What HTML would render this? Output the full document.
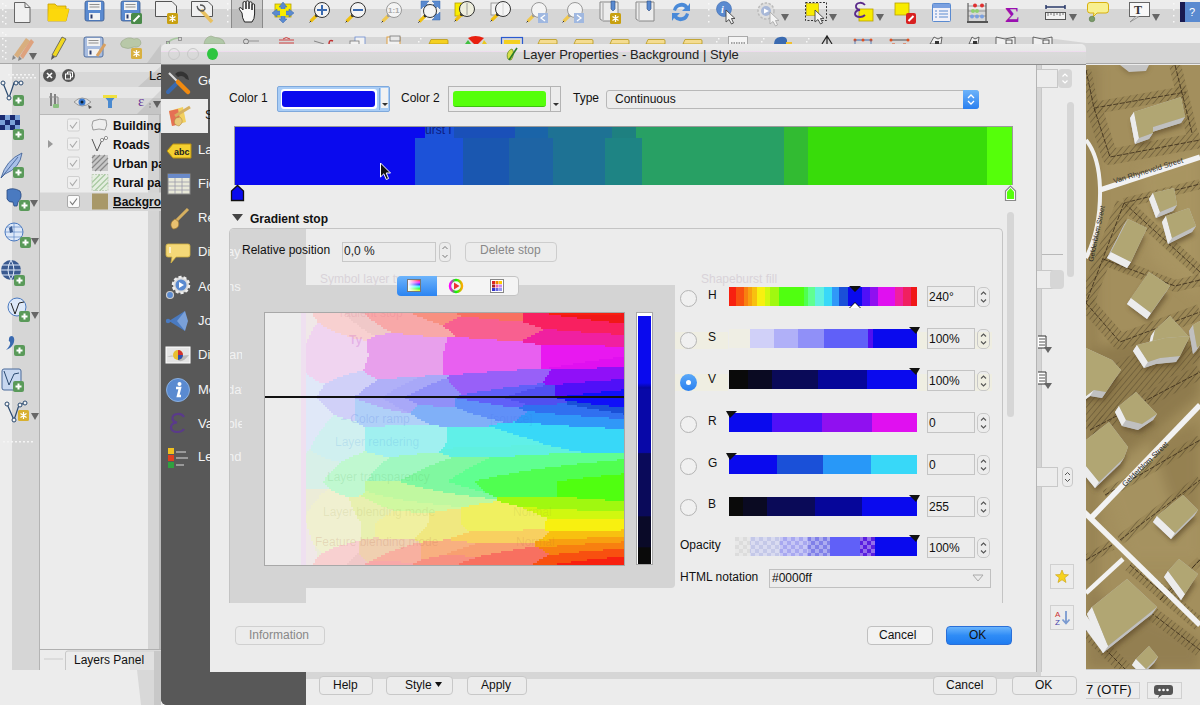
<!DOCTYPE html>
<html><head><meta charset="utf-8">
<style>
*{box-sizing:border-box;margin:0;padding:0}
html,body{width:1200px;height:705px;overflow:hidden;background:#ececec;font-family:"Liberation Sans",sans-serif;font-size:13px;color:#111;position:relative}
.a{position:absolute}
.t{position:absolute;white-space:nowrap;line-height:1}
</style></head><body>
<!-- top toolbars -->
<svg class="a" style="left:0;top:0" width="1200" height="65"><rect x="0" y="0" width="1200" height="9" fill="#ececec"/><rect x="0" y="9" width="1200" height="19" fill="#d6d6d6"/><rect x="0" y="28" width="1200" height="9" fill="#ececec"/><rect x="0" y="37" width="1200" height="26" fill="#d6d6d6"/><rect x="1086" y="28" width="114" height="15" fill="#ececec"/><path d="M1040 37 L1086 43 V37 Z" fill="#ececec"/><rect x="0" y="63" width="1200" height="1" fill="#a8a8a8"/><rect x="231" y="0" width="32" height="28" fill="#bdbdbd"/><rect x="231" y="0" width="32" height="9" fill="#cfcfcf"/><rect x="231" y="0" width="1" height="28" fill="#8a8a8a"/><rect x="262" y="0" width="1" height="28" fill="#8a8a8a"/><rect x="2" y="3" width="1.5" height="1.5" fill="#f8f8f8"/><rect x="2" y="9" width="1.5" height="1.5" fill="#f8f8f8"/><rect x="2" y="15" width="1.5" height="1.5" fill="#f8f8f8"/><rect x="2" y="21" width="1.5" height="1.5" fill="#f8f8f8"/><rect x="5" y="5" width="1.5" height="1.5" fill="#f8f8f8"/><rect x="5" y="11" width="1.5" height="1.5" fill="#f8f8f8"/><rect x="5" y="17" width="1.5" height="1.5" fill="#f8f8f8"/><rect x="5" y="23" width="1.5" height="1.5" fill="#f8f8f8"/><rect x="227" y="3" width="1.5" height="1.5" fill="#f8f8f8"/><rect x="227" y="9" width="1.5" height="1.5" fill="#f8f8f8"/><rect x="227" y="15" width="1.5" height="1.5" fill="#f8f8f8"/><rect x="227" y="21" width="1.5" height="1.5" fill="#f8f8f8"/><rect x="708" y="3" width="1.5" height="1.5" fill="#f8f8f8"/><rect x="708" y="9" width="1.5" height="1.5" fill="#f8f8f8"/><rect x="708" y="15" width="1.5" height="1.5" fill="#f8f8f8"/><rect x="708" y="21" width="1.5" height="1.5" fill="#f8f8f8"/><rect x="1173" y="3" width="1.5" height="1.5" fill="#f8f8f8"/><rect x="1173" y="9" width="1.5" height="1.5" fill="#f8f8f8"/><rect x="1173" y="15" width="1.5" height="1.5" fill="#f8f8f8"/><rect x="1173" y="21" width="1.5" height="1.5" fill="#f8f8f8"/><rect x="2" y="32" width="1.5" height="1.5" fill="#f8f8f8"/><rect x="2" y="38" width="1.5" height="1.5" fill="#f8f8f8"/><rect x="2" y="44" width="1.5" height="1.5" fill="#f8f8f8"/><rect x="2" y="50" width="1.5" height="1.5" fill="#f8f8f8"/><rect x="2" y="56" width="1.5" height="1.5" fill="#f8f8f8"/><rect x="5" y="34" width="1.5" height="1.5" fill="#f8f8f8"/><rect x="5" y="40" width="1.5" height="1.5" fill="#f8f8f8"/><rect x="5" y="46" width="1.5" height="1.5" fill="#f8f8f8"/><rect x="5" y="52" width="1.5" height="1.5" fill="#f8f8f8"/><rect x="5" y="58" width="1.5" height="1.5" fill="#f8f8f8"/><path d="M14.5 2.5 H25 L30 7.5 V22.5 H14.5 Z" fill="#f0f0f0" stroke="#666" stroke-width="1"/><path d="M25 2.5 V7.5 H30" fill="none" stroke="#666"/><path d="M48 4 H55 L57 6 H66 V9 H69 L66 21 H48 Z" fill="#f8d210" stroke="#c8a000" stroke-width=".8"/><path d="M49 9 H69 L66 21 H48 Z" fill="#fcd80c"/><rect x="85" y="1" width="19" height="20" rx="2" fill="#5a8ad0" stroke="#3a5a90" stroke-width=".8"/><rect x="88" y="2" width="13" height="8" fill="#f2f2f2"/><path d="M89.5 4.5 H99.5 M89.5 7 H99.5" stroke="#666" stroke-width=".7"/><rect x="89" y="13" width="11" height="7" fill="#f2f2f2"/><rect x="90.5" y="14.5" width="2" height="4" fill="#2a3a6a"/><rect x="121" y="1" width="19" height="20" rx="2" fill="#5a8ad0" stroke="#3a5a90" stroke-width=".8"/><rect x="124" y="2" width="13" height="8" fill="#f2f2f2"/><path d="M125.5 4.5 H135.5 M125.5 7 H135.5" stroke="#666" stroke-width=".7"/><rect x="125" y="13" width="11" height="7" fill="#f2f2f2"/><rect x="126.5" y="14.5" width="2" height="4" fill="#2a3a6a"/><rect x="131" y="13" width="11" height="11" rx="1.5" fill="#4a8a4a"/><path d="M133.5 21.5 L139.5 15.5" stroke="#fff" stroke-width="2"/><path d="M155.5 1.5 H172 L176.5 6 V16.5 H155.5 Z" fill="#f0f0f0" stroke="#555" stroke-width="1"/><rect x="167" y="13" width="11" height="11" rx="1.5" fill="#c8a010"/><path d="M172.5 15 V22 M169.5 16.5 L175.5 20.5 M175.5 16.5 L169.5 20.5" stroke="#fff" stroke-width="1.3"/><path d="M191.5 1.5 H208 L212.5 6 V16.5 H191.5 Z" fill="#f0f0f0" stroke="#555" stroke-width="1"/><path d="M201 10 L212 22" stroke="#e8c060" stroke-width="3.5"/><path d="M197 6 Q198 11 203 11 L205 9 Q205 5 200 5" fill="none" stroke="#555" stroke-width="1.3"/><path d="M242 13 L239.5 9.5 Q238.5 8 240 7.5 Q241.5 7.5 243 10 V3 Q243 1.5 244.5 1.5 Q246 1.5 246 3 V9 V2 Q246 0.8 247.5 0.8 Q249 0.8 249 2 V9 V3 Q249 1.8 250.5 1.8 Q252 1.8 252 3 V10 V5 Q252 3.8 253.3 3.8 Q254.6 3.8 254.6 5 V14 Q254.6 19 252 22 H244.5 Q242 18 242 13 Z" fill="#f8f8f8" stroke="#222" stroke-width="1"/><rect x="275" y="4" width="16" height="13" fill="#f8ec00" stroke="#b8a000" stroke-width=".8"/><path d="M283 2 L287 7 H285 V11 H289 V9 L294 13 L289 17 V15 H285 V19 H287 L283 23 L279 19 H281 V15 H277 V17 L272 13 L277 9 V11 H281 V7 H279 Z" fill="#5a8ad0" stroke="#3a6ab0" stroke-width=".5"/><rect x="280" y="9" width="6" height="7" fill="#f8ec00"/><path d="M316.6 15.4 L310.6 21.4" stroke="#f0c010" stroke-width="3.2"/><path d="M311.1 20.9 L309.6 22.4" stroke="#333" stroke-width="1"/><circle cx="316.6" cy="15.4" r="1.6" fill="#333"/><circle cx="322" cy="10" r="7.5" fill="#f4f4f4" stroke="#333" stroke-width="1"/><path d="M317 10 H327 M322 5 V15" stroke="#3a6ab0" stroke-width="2"/><path d="M352.6 15.4 L346.6 21.4" stroke="#f0c010" stroke-width="3.2"/><path d="M347.1 20.9 L345.6 22.4" stroke="#333" stroke-width="1"/><circle cx="352.6" cy="15.4" r="1.6" fill="#333"/><circle cx="358" cy="10" r="7.5" fill="#f4f4f4" stroke="#333" stroke-width="1"/><path d="M353 10 H363" stroke="#3a6ab0" stroke-width="2"/><path d="M388.6 15.4 L382.6 21.4" stroke="#f0c850" stroke-width="3.2"/><path d="M383.1 20.9 L381.6 22.4" stroke="#333" stroke-width="1"/><circle cx="388.6" cy="15.4" r="1.6" fill="#999"/><circle cx="394" cy="10" r="7.5" fill="#f4f4f4" stroke="#999" stroke-width="1"/><text x="388" y="13" font-size="8" font-weight="bold" font-family="Liberation Sans" fill="#aaa">1:1</text><rect x="421" y="1" width="19" height="19" fill="#eeeeee"/><path d="M421 1 H429 L426.5 3.5 L429.5 6.5 L426.5 9.5 L423.5 6.5 L421 9 Z M440 1 H432 L434.5 3.5 L431.5 6.5 L434.5 9.5 L437.5 6.5 L440 9 Z M440 20 H432 L434.5 17.5 L431.5 14.5 L434.5 11.5 L437.5 14.5 L440 12 Z" fill="#5a8ad0" stroke="#3a6ab0" stroke-width=".5"/><path d="M425.3 15.7 L419.3 21.7" stroke="#f0c010" stroke-width="3.2"/><path d="M419.8 21.2 L418.3 22.7" stroke="#333" stroke-width="1"/><circle cx="425.3" cy="15.7" r="1.6" fill="#333"/><circle cx="430" cy="11" r="6.5" fill="#f4f4f4" stroke="#333" stroke-width="1"/><rect x="455" y="3" width="8" height="13" fill="#f8ec00" stroke="#b8a000" stroke-width=".8"/><path d="M461.6 14.4 L455.6 20.4" stroke="#f0c010" stroke-width="3.2"/><path d="M456.1 19.9 L454.6 21.4" stroke="#333" stroke-width="1"/><circle cx="461.6" cy="14.4" r="1.6" fill="#333"/><circle cx="467" cy="9" r="7.5" fill="#eeeedd" stroke="#333" stroke-width="1"/><path d="M467 3 V15" stroke="#888" stroke-width=".8"/><rect x="491" y="3" width="8" height="12" fill="#f2f2f2" stroke="#888" stroke-width=".8"/><path d="M497.6 14.4 L491.6 20.4" stroke="#f0c010" stroke-width="3.2"/><path d="M492.1 19.9 L490.6 21.4" stroke="#333" stroke-width="1"/><circle cx="497.6" cy="14.4" r="1.6" fill="#333"/><circle cx="503" cy="9" r="7.5" fill="#f4f4f4" stroke="#333" stroke-width="1"/><path d="M503 3 V15" stroke="#ccc" stroke-width=".8"/><path d="M533.6 15.4 L527.6 21.4" stroke="#f0c850" stroke-width="3.2"/><path d="M528.1 20.9 L526.6 22.4" stroke="#333" stroke-width="1"/><circle cx="533.6" cy="15.4" r="1.6" fill="#999"/><circle cx="539" cy="10" r="7.5" fill="#f4f4f4" stroke="#999" stroke-width="1"/><rect x="538" y="13" width="10" height="10" fill="#a0b8e0"/><path d="M545 15 L541 18 L545 21" stroke="#fff" stroke-width="1.3" fill="none"/><path d="M569.6 15.4 L563.6 21.4" stroke="#f0c850" stroke-width="3.2"/><path d="M564.1 20.9 L562.6 22.4" stroke="#333" stroke-width="1"/><circle cx="569.6" cy="15.4" r="1.6" fill="#999"/><circle cx="575" cy="10" r="7.5" fill="#f4f4f4" stroke="#999" stroke-width="1"/><rect x="574" y="13" width="10" height="10" fill="#a0b8e0"/><path d="M577 15 L581 18 L577 21" stroke="#fff" stroke-width="1.3" fill="none"/><path d="M600 2 H618 V21 H603 L600 19 Z" fill="#ececec" stroke="#888" stroke-width="1"/><path d="M603 3 V21" stroke="#bbb" stroke-width="1.5"/><path d="M611 1 H615 V9 L613 11 L611 9 Z" fill="#5a8ad0" stroke="#2a4a80" stroke-width=".6"/><rect x="610" y="13" width="11" height="11" rx="1.5" fill="#c8a010"/><path d="M615.5 15 V22 M612.5 16.5 L618.5 20.5 M618.5 16.5 L612.5 20.5" stroke="#fff" stroke-width="1.3"/><path d="M636 2 H654 V21 H639 L636 19 Z" fill="#ececec" stroke="#888" stroke-width="1"/><path d="M639 3 V21" stroke="#bbb" stroke-width="1.5"/><path d="M647 1 H651 V9 L649 11 L647 9 Z" fill="#5a8ad0" stroke="#2a4a80" stroke-width=".6"/><path d="M673 10 A8.5 8.5 0 0 1 688 6 L690 3 L690 11 L682 11 L685 8 A5.5 5.5 0 0 0 676 11 Z" fill="#4a8ad8"/><path d="M689 14 A8.5 8.5 0 0 1 674 18 L672 21 L672 13 L680 13 L677 16 A5.5 5.5 0 0 0 686 13 Z" fill="#4a8ad8"/><circle cx="724" cy="9" r="7.5" fill="#5a8ad0" stroke="#3a6ab0" stroke-width=".6"/><text x="721" y="13" font-size="10" font-style="italic" font-weight="bold" font-family="Liberation Serif" fill="#fff">i</text><path d="M726 10 V22.0 L729.0 19.5 L731.5 24.0 L733.5 23.0 L731.5 18.5 L735.0 18.5 Z" fill="#f4f4f4" stroke="#444" stroke-width=".9"/><circle cx="766" cy="11" r="8" fill="#dedede" stroke="#bbb" stroke-width="1.5" stroke-dasharray="2.5 1.5"/><circle cx="766" cy="11" r="5" fill="#a8b8d8"/><path d="M764 8.5 L769 11 L764 13.5 Z" fill="#fff"/><path d="M770 12 V24.0 L773.0 21.5 L775.5 26.0 L777.5 25.0 L775.5 20.5 L779.0 20.5 Z" fill="#f4f4f4" stroke="#aaa" stroke-width=".9"/><path d="M781 14 H789 L785 21 Z" fill="#666"/><rect x="805.5" y="2.5" width="21" height="18" fill="none" stroke="#333" stroke-dasharray="2 1.5" stroke-width="1"/><rect x="806.5" y="3.5" width="12" height="12" fill="#f8ec00" stroke="#b8a000" stroke-width=".6"/><path d="M815 10 V22.0 L818.0 19.5 L820.5 24.0 L822.5 23.0 L820.5 18.5 L824.0 18.5 Z" fill="#f4f4f4" stroke="#444" stroke-width=".9"/><path d="M829 14 H837 L833 21 Z" fill="#666"/><rect x="859" y="9" width="14" height="12" fill="#f8ec00" stroke="#b8a000" stroke-width=".8"/><path d="M865 5 Q863 2.5 860 2.8 Q855.5 3.2 856 7 Q856.5 9.5 860 10 Q855 10.5 855 14 Q855.5 17 860 17 Q863 17 865 15" stroke="#5a2a8a" stroke-width="1.8" fill="none"/><path d="M876 14 H884 L880 21 Z" fill="#666"/><rect x="895" y="3" width="14" height="12" fill="#f8ec00" stroke="#b8a000" stroke-width=".8"/><rect x="906" y="13" width="10" height="11" rx="2" fill="#d82020"/><path d="M908.5 21 L913.5 16" stroke="#fff" stroke-width="2"/><rect x="932.5" y="3.5" width="18" height="18" rx="1" fill="#f0f0f8" stroke="#5a8ad0" stroke-width="1"/><rect x="933" y="4" width="17" height="4" fill="#7aa0e0"/><path d="M935 11 H937 M939 11 H948 M935 14 H937 M939 14 H948 M935 17 H937 M939 17 H948" stroke="#5a8ad0" stroke-width="1"/><path d="M968 3 V22 M986 3 V22" stroke="#444" stroke-width="1"/><rect x="967" y="21" width="21" height="2" fill="#555"/><path d="M968 6 H986 M968 11 H986 M968 16 H986" stroke="#666" stroke-width=".6"/><circle cx="975" cy="5.5" r="2" fill="#e03030"/><circle cx="982" cy="5.5" r="2" fill="#e03030"/><circle cx="973" cy="11" r="2" fill="#90d070"/><circle cx="977" cy="11" r="2" fill="#90d070"/><circle cx="972" cy="16.5" r="2" fill="#7aa0e0"/><circle cx="977" cy="16.5" r="2" fill="#7aa0e0"/><circle cx="982" cy="16.5" r="2" fill="#7aa0e0"/><text x="1005" y="22" font-size="22" font-weight="bold" font-family="Liberation Serif" fill="#9a10b0">&#931;</text><path d="M1046 7 H1065 M1046 5 V9 M1065 5 V9" stroke="#2a3a6a" stroke-width="1.5"/><rect x="1045.5" y="12.5" width="20" height="7" fill="#f2f2f2" stroke="#555" stroke-width="1"/><path d="M1048 12.5 V16 M1051 12.5 V15 M1054 12.5 V16 M1057 12.5 V15 M1060 12.5 V16 M1063 12.5 V15" stroke="#555" stroke-width=".8"/><path d="M1069 14 H1077 L1073 21 Z" fill="#666"/><path d="M1090 2.5 H1106 Q1108.5 2.5 1108.5 5 V10.5 Q1108.5 13 1106 13 H1097 L1093 17 L1094 13 H1090 Q1087.5 13 1087.5 10.5 V5 Q1087.5 2.5 1090 2.5 Z" fill="#f8f090" stroke="#d8b010" stroke-width="1"/><circle cx="1092" cy="19" r="2.8" fill="#7a9a6a" stroke="#5a7a4a" stroke-width=".6"/><rect x="1129.5" y="2.5" width="20" height="14" fill="#f8f8f8" stroke="#666" stroke-width="1"/><path d="M1136 16.5 L1130 22 L1139 16.5" fill="#f8f8f8" stroke="#888" stroke-width=".8"/><text x="1134" y="14" font-size="12" font-weight="bold" font-family="Liberation Serif" fill="#333">T</text><path d="M1152 14 H1160 L1156 21 Z" fill="#666"/><rect x="1180" y="2" width="20" height="20" fill="#5a8ad0"/><rect x="1180" y="2" width="5" height="20" fill="#1a1a50"/><text x="1189" y="16" font-size="11" font-family="Liberation Sans" fill="#fff">?</text><path d="M14 55 L26 38 L30 41 L18 58 Z" fill="#d8a060" opacity=".75"/><path d="M20 56 L31 39 L34 42 L23 59 Z" fill="#e09060" opacity=".75"/><path d="M13 55 L12 60 L16 58 Z M19 56 L18 61 L22 59 Z" fill="#888"/><path d="M29 53 H37 L33 60 Z" fill="#666"/><path d="M52 55 L62 37 L66 39 L56 57 Z" fill="#f0d820" stroke="#555" stroke-width=".8"/><path d="M52 55 L51 60 L55 57 Z" fill="#555"/><rect x="84" y="37" width="19" height="20" rx="2" fill="#a8bde0" stroke="#3a5a90" stroke-width=".8"/><rect x="87" y="38" width="13" height="8" fill="#f2f2f2"/><path d="M88.5 40.5 H98.5 M88.5 43 H98.5" stroke="#666" stroke-width=".7"/><rect x="88" y="49" width="11" height="7" fill="#f2f2f2"/><rect x="89.5" y="50.5" width="2" height="4" fill="#2a3a6a"/><path d="M97 56 L105 44" stroke="#d8a060" stroke-width="3"/><path d="M122 41 Q128 36 134 39 Q140 37 141 43 Q140 48 134 47 Q128 50 122 47 Q119 44 122 41 Z" fill="#b8c8a8" stroke="#98a888" stroke-width=".6"/><rect x="131" y="48" width="11" height="11" rx="1.5" fill="#d8b040"/><path d="M136.5 50 V57 M133.5 51.5 L139.5 55.5 M139.5 51.5 L133.5 55.5" stroke="#fff" stroke-width="1.3"/><path d="M167 44 Q170 39 178 38" stroke="#a8c8a0" stroke-width="1.5" fill="none"/><rect x="166.5" y="41.5" width="3" height="3" fill="none" stroke="#888" stroke-width=".8"/><rect x="178.5" y="37.5" width="3" height="3" fill="none" stroke="#888" stroke-width=".8"/><path d="M204 44 Q205 37 211 36 Q216 38 219 38 Q224 39 225 44 Z" fill="#b0c8a8" stroke="#98a888" stroke-width=".6"/><circle cx="246" cy="41.5" r="2.5" fill="none" stroke="#777" stroke-width="1"/><path d="M249 41 H259" stroke="#aaa" stroke-width="1.5"/><path d="M279 40 H294 M279 43 H294" stroke="#d04040" stroke-width="1.2"/><path d="M283 39 Q286 36 290 39" stroke="#d04040" fill="none"/><path d="M314 41 L324 44" stroke="#888" stroke-width="1"/><path d="M329 44 Q329 39 333 41" stroke="#c03030" stroke-width="1.5" fill="none"/><rect x="355" y="37" width="10" height="8" fill="#f2f2f2" stroke="#6a8ad0" stroke-width=".8"/><rect x="350" y="41" width="9" height="4" fill="#f2f2f2" stroke="#777" stroke-width=".8"/><rect x="387" y="37" width="13" height="8" fill="#f2f2f2" stroke="#e0a040" stroke-width="1"/><rect x="390" y="36" width="10" height="5" fill="#e8e8e8" stroke="#777" stroke-width=".8"/><path d="M429 44 L431 39.5 H447 Q448 39.5 448 41 V44 Z" fill="#f4d020" stroke="#b89818" stroke-width=".8"/><path d="M538 44 L540 39.5 H556 Q557 39.5 557 41 V44 Z" fill="#f4dc90" stroke="#b89818" stroke-width=".8"/><path d="M574 44 L576 39.5 H592 Q593 39.5 593 41 V44 Z" fill="#f4dc90" stroke="#b89818" stroke-width=".8"/><path d="M610 44 L612 39.5 H628 Q629 39.5 629 41 V44 Z" fill="#f4dc90" stroke="#b89818" stroke-width=".8"/><path d="M646 44 L648 39.5 H664 Q665 39.5 665 41 V44 Z" fill="#f4dc90" stroke="#b89818" stroke-width=".8"/><path d="M683 44 L685 39.5 H701 Q702 39.5 702 41 V44 Z" fill="#f4dc90" stroke="#b89818" stroke-width=".8"/><path d="M468 38 Q475 34 484 38 L478 44 H474 Z" fill="#e82010"/><path d="M465 44 L468 40 L471 44 Z" fill="#40c040"/><path d="M482 44 L484 40 L487 44 Z" fill="#e8c820"/><rect x="501.5" y="37.5" width="21" height="8" fill="none" stroke="#2a5ad0" stroke-width="1.2"/><path d="M504 44 V40 H520 V44 Z" fill="#f4d020"/><rect x="728.5" y="36.5" width="19" height="9" fill="#f4f4f4" stroke="#999" stroke-width=".8"/><path d="M731 43 H745" stroke="#555" stroke-width="1" stroke-dasharray="1.5 1"/><path d="M774 44 Q774 38 780 37 Q786 36 787 40 V44 Z" fill="#3a6ab0"/><path d="M786 42 H792 V44 H786 Z" fill="#f0c030"/><path d="M822 44 L827 36 L832 44 M827 36 V44" stroke="#222" stroke-width="1.2" fill="none"/><path d="M855 40 H872" stroke="#3a6ab0" stroke-width="1"/><circle cx="855" cy="40" r="1.5" fill="#e05020"/><circle cx="863" cy="40" r="1.5" fill="#e05020"/><circle cx="871" cy="40" r="1.5" fill="#e05020"/><path d="M855 40 V44 M871 40 V44" stroke="#3a6ab0" stroke-width=".8"/><path d="M891 40 H908" stroke="#555" stroke-width="1"/><circle cx="891" cy="40" r="1.5" fill="#e05020"/><circle cx="908" cy="40" r="1.5" fill="#e05020"/><path d="M892 44 H895 M903 44 H906" stroke="#e05020"/><path d="M930 44 L934 37 L938 39 L942 37 L941 44 Z" fill="#f0f0f0" stroke="#444" stroke-width=".8"/><rect x="935" y="41" width="4" height="3" fill="#333"/><path d="M969 44 L972 37 L975 39 L979 37 L978 44 Z" fill="#f0f0f0" stroke="#444" stroke-width=".8"/><rect x="973" y="41" width="4" height="3" fill="#333"/><path d="M996 44 V37 L1005 39 L1015 37 V44" fill="#f0f0f0" stroke="#444" stroke-width=".8"/><rect x="1006" y="40" width="6" height="4" fill="none" stroke="#333" stroke-width=".8"/><path d="M1033 44 V37 L1042 39 L1052 37 V44" fill="#f0f0f0" stroke="#444" stroke-width=".8"/><rect x="1043" y="40" width="6" height="4" fill="none" stroke="#333" stroke-width=".8"/><rect x="420" y="38" width="1.5" height="1.5" fill="#f8f8f8"/><rect x="418" y="41" width="1.5" height="1.5" fill="#f8f8f8"/><rect x="718" y="38" width="1.5" height="1.5" fill="#f8f8f8"/><rect x="716" y="41" width="1.5" height="1.5" fill="#f8f8f8"/><rect x="763" y="38" width="1.5" height="1.5" fill="#f8f8f8"/><rect x="761" y="41" width="1.5" height="1.5" fill="#f8f8f8"/><rect x="808" y="38" width="1.5" height="1.5" fill="#f8f8f8"/><rect x="806" y="41" width="1.5" height="1.5" fill="#f8f8f8"/></svg>
<!-- left toolbar -->
<svg class="a" style="left:0;top:64px" width="161" height="641"><rect x="12" y="0" width="27" height="606" fill="#d6d6d6"/><rect x="39" y="0" width="1" height="606" fill="#b4b4b4"/><rect x="8" y="10" width="2" height="1.5" fill="#f4f4f4"/><rect x="10" y="13" width="2" height="1.5" fill="#f4f4f4"/><rect x="12" y="10" width="2" height="1.5" fill="#f4f4f4"/><rect x="14" y="13" width="2" height="1.5" fill="#f4f4f4"/><rect x="16" y="10" width="2" height="1.5" fill="#f4f4f4"/><rect x="18" y="13" width="2" height="1.5" fill="#f4f4f4"/><rect x="20" y="10" width="2" height="1.5" fill="#f4f4f4"/><rect x="22" y="13" width="2" height="1.5" fill="#f4f4f4"/><rect x="24" y="10" width="2" height="1.5" fill="#f4f4f4"/><rect x="26" y="13" width="2" height="1.5" fill="#f4f4f4"/><rect x="28" y="10" width="2" height="1.5" fill="#f4f4f4"/><rect x="30" y="13" width="2" height="1.5" fill="#f4f4f4"/><rect x="32" y="10" width="2" height="1.5" fill="#f4f4f4"/><rect x="34" y="13" width="2" height="1.5" fill="#f4f4f4"/><path d="M3 19 L9 34 L14 19 L17 18 L22 19" stroke="#2a4a70" stroke-width="1.2" fill="none"/><circle cx="3" cy="19" r="2" fill="#f4f4f4" stroke="#2a4a70"/><circle cx="9" cy="34" r="2" fill="#f4f4f4" stroke="#2a4a70"/><circle cx="16" cy="19" r="2" fill="#f4f4f4" stroke="#2a4a70"/><circle cx="21" cy="19" r="2" fill="#f4f4f4" stroke="#2a4a70"/><rect x="13" y="31" width="11" height="11" rx="2" fill="#5a9a5a"/><path d="M18.5 33.5 V39.5 M15.5 36.5 H21.5" stroke="#fff" stroke-width="2"/><rect x="0" y="51" width="5" height="5" fill="#1a2a70"/><rect x="5" y="51" width="5" height="5" fill="#7aa0d8"/><rect x="10" y="51" width="5" height="5" fill="#1a2a70"/><rect x="15" y="51" width="5" height="5" fill="#7aa0d8"/><rect x="0" y="56" width="5" height="5" fill="#7aa0d8"/><rect x="5" y="56" width="5" height="5" fill="#1a2a70"/><rect x="10" y="56" width="5" height="5" fill="#7aa0d8"/><rect x="15" y="56" width="5" height="5" fill="#1a2a70"/><rect x="0" y="61" width="5" height="5" fill="#1a2a70"/><rect x="5" y="61" width="5" height="5" fill="#7aa0d8"/><rect x="10" y="61" width="5" height="5" fill="#1a2a70"/><rect x="15" y="61" width="5" height="5" fill="#7aa0d8"/><rect x="13" y="65" width="11" height="11" rx="2" fill="#5a9a5a"/><path d="M18.5 67.5 V73.5 M15.5 70.5 H21.5" stroke="#fff" stroke-width="2"/><path d="M1 114 Q6 96 22 89 Q20 104 5 110 Z" fill="#a8c0e8" stroke="#3a5a90" stroke-width=".8"/><path d="M1 114 L18 93" stroke="#3a5a90" stroke-width=".8"/><rect x="13" y="103" width="11" height="11" rx="2" fill="#5a9a5a"/><path d="M18.5 105.5 V111.5 M15.5 108.5 H21.5" stroke="#fff" stroke-width="2"/><path d="M7 126 Q13 123 20 127 Q23 133 18 138 L17 142 H14 L13 138 Q9 139 7 135 Z" fill="#4a7ac0" stroke="#2a4a80" stroke-width=".8"/><rect x="19" y="136" width="11" height="11" rx="2" fill="#5a9a5a"/><path d="M24.5 138.5 V144.5 M21.5 141.5 H27.5" stroke="#fff" stroke-width="2"/><path d="M30 136 H38 L34 143 Z" fill="#666"/><circle cx="14" cy="168" r="9" fill="#dde8f8" stroke="#4a7ac0" stroke-width="1"/><path d="M5 168 H23 M14 159 V177 M7 163 H21 M7 173 H21" stroke="#4a7ac0" stroke-width=".6"/><path d="M9 164 L12 162 L13 168 L10 169 Z" fill="#3a5a90"/><rect x="20" y="173" width="11" height="11" rx="2" fill="#5a9a5a"/><path d="M25.5 175.5 V181.5 M22.5 178.5 H28.5" stroke="#fff" stroke-width="2"/><path d="M31 174 H39 L35 181 Z" fill="#666"/><circle cx="11" cy="206" r="10" fill="#3a5a90"/><path d="M1 206 H21 M2 201 H20 M2 211 H20" stroke="#dde8f8" stroke-width="1.2"/><path d="M11 196 Q5 206 11 216 Q17 206 11 196" stroke="#dde8f8" stroke-width="1" fill="none"/><rect x="14" y="211" width="11" height="11" rx="2" fill="#5a9a5a"/><path d="M19.5 213.5 V219.5 M16.5 216.5 H22.5" stroke="#fff" stroke-width="2"/><circle cx="17" cy="243" r="9" fill="#dde8f8" stroke="#4a7ac0" stroke-width="1"/><path d="M11 239 L15 250 L19 239 L24 238" stroke="#222" stroke-width="1" fill="none"/><rect x="19" y="247" width="11" height="11" rx="2" fill="#5a9a5a"/><path d="M24.5 249.5 V255.5 M21.5 252.5 H27.5" stroke="#fff" stroke-width="2"/><path d="M31 248 H39 L35 255 Z" fill="#666"/><path d="M9 275 Q9 272 12 272 Q15 273 14 278 Q13 283 6 286 Q11 281 10 278 Q8 277 9 275 Z" fill="#3a6ab0"/><rect x="14" y="281" width="11" height="11" rx="2" fill="#5a9a5a"/><path d="M19.5 283.5 V289.5 M16.5 286.5 H22.5" stroke="#fff" stroke-width="2"/><rect x="2" y="305" width="19" height="21" rx="2" fill="#c8d8f0" stroke="#4a6a9a" stroke-width="1"/><path d="M4 307 L9 321 L14 310 L19 309" stroke="#2a4a70" stroke-width="1" fill="none"/><rect x="13" y="317" width="11" height="11" rx="2" fill="#5a9a5a"/><path d="M18.5 319.5 V325.5 M15.5 322.5 H21.5" stroke="#fff" stroke-width="2"/><path d="M7 340 L14 356 L19 341 L25 339" stroke="#2a4a70" stroke-width="1.2" fill="none"/><circle cx="7" cy="340" r="2" fill="#f4f4f4" stroke="#2a4a70"/><circle cx="14" cy="356" r="2" fill="#f4f4f4" stroke="#2a4a70"/><circle cx="20" cy="341" r="2" fill="#f4f4f4" stroke="#2a4a70"/><circle cx="25" cy="339" r="2" fill="#f4f4f4" stroke="#2a4a70"/><rect x="18" y="346" width="11" height="11" rx="1.5" fill="#d8b030"/><path d="M23.5 348 V355 M20.5 349.5 L26.5 353.5 M26.5 349.5 L20.5 353.5" stroke="#fff" stroke-width="1.2"/><path d="M31 349 H39 L35 356 Z" fill="#666"/><rect x="3" y="377" width="2" height="1.5" fill="#f4f4f4"/><rect x="7" y="377" width="2" height="1.5" fill="#f4f4f4"/><rect x="11" y="377" width="2" height="1.5" fill="#f4f4f4"/><rect x="15" y="377" width="2" height="1.5" fill="#f4f4f4"/><rect x="19" y="377" width="2" height="1.5" fill="#f4f4f4"/><rect x="23" y="377" width="2" height="1.5" fill="#f4f4f4"/><rect x="27" y="377" width="2" height="1.5" fill="#f4f4f4"/><rect x="31" y="377" width="2" height="1.5" fill="#f4f4f4"/><rect x="40" y="0" width="121" height="24" fill="#d8d8d8"/><rect x="40" y="0" width="121" height="8" fill="#e4e4e4"/><circle cx="49.5" cy="11.5" r="6.5" fill="#555"/><path d="M47 9 L52 14 M52 9 L47 14" stroke="#fff" stroke-width="1.6"/><circle cx="68.5" cy="11.5" r="6.5" fill="#555"/><rect x="65.5" y="10" width="5" height="5" fill="none" stroke="#fff" stroke-width="1"/><path d="M67.5 10 V8 H72.5 V13 H70.5" fill="none" stroke="#fff" stroke-width="1"/><text x="149" y="16" font-size="13" font-family="Liberation Sans" fill="#111">La</text><rect x="40" y="23" width="121" height="28" fill="#d6d6d6"/><rect x="40" y="23" width="121" height="11" fill="#e6e6e6"/><rect x="40" y="50" width="121" height="1" fill="#b8b8b8"/><path d="M51 29 V42 M55 30 V42" stroke="#444" stroke-width="1.2"/><path d="M49 33 H58 V41" stroke="#888" fill="none"/><rect x="53" y="40" width="6" height="4" rx="1" fill="#8ac080"/><path d="M74 38 Q82 30 91 38 Q82 46 74 38 Z" fill="#e0e0e0" stroke="#888" stroke-width=".8"/><circle cx="82" cy="38" r="3.5" fill="#3a7ad0"/><circle cx="82" cy="38" r="1.5" fill="#123"/><path d="M88 41 L92 43 L89 45" fill="#555"/><path d="M103 31 H117 L112 37 V44 H108 V37 Z" fill="#4a8ad0"/><rect x="103" y="31" width="14" height="3" fill="#f0e040"/><text x="138" y="42" font-size="15" font-family="Liberation Serif" fill="#6a3a9a">&#949;</text><path d="M149 40 H151 M149 43 H151" stroke="#999"/><path d="M153 37 H161 L157 44 Z" fill="#666"/><rect x="40" y="51" width="121" height="534" fill="#ececec"/><rect x="148" y="51" width="11" height="534" fill="#d4d4d4"/><rect x="159" y="51" width="2" height="534" fill="#bababa"/><rect x="40" y="128.5" width="121" height="18.5" fill="#d6d6d6"/><rect x="40" y="585" width="121" height="1" fill="#b0b0b0"/><rect x="67.5" y="55" width="12" height="12" rx="1.5" fill="#f0f0f0" stroke="#d0d0d0" stroke-width="1"/><path d="M70 61 L72.5 64 L77 58" stroke="#aaa" stroke-width="1.1" fill="none"/><text x="113" y="65.5" font-size="12" font-weight="bold" font-family="Liberation Sans" fill="#111">Building</text><rect x="67.5" y="74" width="12" height="12" rx="1.5" fill="#f0f0f0" stroke="#d0d0d0" stroke-width="1"/><path d="M70 80 L72.5 83 L77 77" stroke="#aaa" stroke-width="1.1" fill="none"/><text x="113" y="84.5" font-size="12" font-weight="bold" font-family="Liberation Sans" fill="#111">Roads</text><rect x="67.5" y="93" width="12" height="12" rx="1.5" fill="#f0f0f0" stroke="#d0d0d0" stroke-width="1"/><path d="M70 99 L72.5 102 L77 96" stroke="#aaa" stroke-width="1.1" fill="none"/><text x="113" y="103.5" font-size="12" font-weight="bold" font-family="Liberation Sans" fill="#111">Urban pa</text><rect x="67.5" y="112.5" width="12" height="12" rx="1.5" fill="#f0f0f0" stroke="#d0d0d0" stroke-width="1"/><path d="M70 118.5 L72.5 121.5 L77 115.5" stroke="#aaa" stroke-width="1.1" fill="none"/><text x="113" y="123.0" font-size="12" font-weight="bold" font-family="Liberation Sans" fill="#111">Rural pa</text><rect x="67.5" y="131.5" width="12" height="12" rx="1.5" fill="#fafafa" stroke="#aaa" stroke-width="1"/><path d="M70 137.5 L72.5 140.5 L77 134.5" stroke="#777" stroke-width="1.1" fill="none"/><text x="113" y="142.0" font-size="12" font-weight="bold" font-family="Liberation Sans" fill="#111" text-decoration="underline">Backgro</text><path d="M48 76 L53 80 L48 84 Z" fill="#999"/><path d="M93 57 Q100 54 106 56 Q108 61 105 66 Q99 64 93 66 Q91 61 93 57 Z" fill="#eee" stroke="#888" stroke-width=".8"/><path d="M92 75 L97 87 L102 76 L106 74" stroke="#555" stroke-width="1" fill="none"/><circle cx="102" cy="76" r="1.6" fill="#fff" stroke="#555" stroke-width=".6"/><circle cx="106" cy="74" r="1.6" fill="#fff" stroke="#555" stroke-width=".6"/><rect x="92" y="91" width="16" height="16" fill="#c8c8c8"/><path d="M92 99 L100 91 M92 104 L105 91 M95 107 L108 94 M100 107 L108 99 M92 94 L95 91" stroke="#888" stroke-width="1.2"/><rect x="92" y="110.5" width="16" height="16" fill="#e4eee0" stroke="#b8c8b0" stroke-dasharray="2 1" stroke-width=".8"/><path d="M92 118.5 L100 110.5 M92 123.5 L105 110.5 M95 126.5 L108 113.5 M100 126.5 L108 118.5" stroke="#a8c8a0" stroke-width="1.2"/><rect x="92" y="129.5" width="16" height="16" fill="#a89868"/><path d="M44 595 H63" stroke="#ccc"/><path d="M65.5 606 V589 Q65.5 587 68 587 H161" fill="none" stroke="#c8c8c8"/><rect x="130" y="587" width="25" height="19" fill="#d8d8d8" opacity=".6"/><text x="74" y="600" font-size="12" font-family="Liberation Sans" fill="#111">Layers Panel</text><path d="M137 606 L141 641 H158 L154 606 Z" fill="#d8d8d8"/><rect x="154" y="587" width="7" height="54" fill="#c8c8c8"/></svg>

<svg class="a" style="left:120px;top:37px" width="41" height="80"><path d="M41 7 V26 H27 Z" fill="#000" opacity=".07"/><path d="M41 29 V50 H18 Z" fill="#000" opacity=".08"/><path d="M41 53 V77 H17 Z" fill="#000" opacity=".08"/></svg>
<!-- map -->
<svg class="a" style="left:1086px;top:65px" width="114" height="604" viewBox="1086 65 114 604"><defs><pattern id="hatch" patternUnits="userSpaceOnUse" width="4.5" height="4.5" patternTransform="rotate(40)"><path d="M0 0 V4.5" stroke="#3a2e1c" stroke-width="1" opacity=".7"/></pattern><filter id="blur" x="-50%" y="-50%" width="200%" height="200%"><feGaussianBlur stdDeviation="2.5"/></filter><filter id="blur2" x="-50%" y="-50%" width="200%" height="200%"><feGaussianBlur stdDeviation="6"/></filter></defs><rect x="1086" y="65" width="114" height="604" fill="#a38f5d"/><g filter="url(#blur2)" opacity=".55"><path d="M1086 65 V669 H1098 V65 Z" fill="#8a7648"/><path d="M1140 170 L1200 150 V300 L1150 260 Z" fill="#ad9a66"/><path d="M1100 470 L1200 420 V560 L1130 560 Z" fill="#a89564"/><path d="M1086 350 L1160 335 L1200 345 V395 L1110 470 L1086 480 Z" fill="#7e6a40"/><path d="M1086 590 L1200 640 V669 H1086 Z" fill="#86724a"/><path d="M1150 440 L1200 420 V520 L1170 500 Z" fill="#8a7648"/></g><path d="M1086 70 L1094 108" fill="none" stroke="#8f7b4b" stroke-width="10" opacity=".35" stroke-linejoin="round"/><path d="M1086 70 L1094 108" fill="none" stroke="url(#hatch)" stroke-width="10" stroke-linejoin="round"/><path d="M1086 70 L1094 108" fill="none" stroke="#2a1c10" stroke-width=".7" stroke-dasharray="5 1.5"/><path d="M1094 108 L1186 92" fill="none" stroke="#8f7b4b" stroke-width="12" opacity=".35" stroke-linejoin="round"/><path d="M1094 108 L1186 92" fill="none" stroke="url(#hatch)" stroke-width="12" stroke-linejoin="round"/><path d="M1094 108 L1186 92" fill="none" stroke="#2a1c10" stroke-width=".7" stroke-dasharray="5 1.5"/><path d="M1094 108 L1110 157 L1200 140" fill="none" stroke="#8f7b4b" stroke-width="16" opacity=".35" stroke-linejoin="round"/><path d="M1094 108 L1110 157 L1200 140" fill="none" stroke="url(#hatch)" stroke-width="16" stroke-linejoin="round"/><path d="M1094 108 L1110 157 L1200 140" fill="none" stroke="#2a1c10" stroke-width=".7" stroke-dasharray="5 1.5"/><path d="M1175 65 L1192 133" fill="none" stroke="#8f7b4b" stroke-width="12" opacity=".35" stroke-linejoin="round"/><path d="M1175 65 L1192 133" fill="none" stroke="url(#hatch)" stroke-width="12" stroke-linejoin="round"/><path d="M1175 65 L1192 133" fill="none" stroke="#2a1c10" stroke-width=".7" stroke-dasharray="5 1.5"/><path d="M1124 203 L1200 184" fill="none" stroke="#8f7b4b" stroke-width="10" opacity=".35" stroke-linejoin="round"/><path d="M1124 203 L1200 184" fill="none" stroke="url(#hatch)" stroke-width="10" stroke-linejoin="round"/><path d="M1124 203 L1200 184" fill="none" stroke="#2a1c10" stroke-width=".7" stroke-dasharray="5 1.5"/><path d="M1124 203 L1200 272" fill="none" stroke="#8f7b4b" stroke-width="12" opacity=".35" stroke-linejoin="round"/><path d="M1124 203 L1200 272" fill="none" stroke="url(#hatch)" stroke-width="12" stroke-linejoin="round"/><path d="M1124 203 L1200 272" fill="none" stroke="#2a1c10" stroke-width=".7" stroke-dasharray="5 1.5"/><path d="M1124 203 L1086 303" fill="none" stroke="#8f7b4b" stroke-width="16" opacity=".35" stroke-linejoin="round"/><path d="M1124 203 L1086 303" fill="none" stroke="url(#hatch)" stroke-width="16" stroke-linejoin="round"/><path d="M1124 203 L1086 303" fill="none" stroke="#2a1c10" stroke-width=".7" stroke-dasharray="5 1.5"/><path d="M1103 259 L1175 286 L1200 280" fill="none" stroke="#8f7b4b" stroke-width="12" opacity=".35" stroke-linejoin="round"/><path d="M1103 259 L1175 286 L1200 280" fill="none" stroke="url(#hatch)" stroke-width="12" stroke-linejoin="round"/><path d="M1103 259 L1175 286 L1200 280" fill="none" stroke="#2a1c10" stroke-width=".7" stroke-dasharray="5 1.5"/><path d="M1086 303 L1120 342 L1200 312" fill="none" stroke="#8f7b4b" stroke-width="16" opacity=".35" stroke-linejoin="round"/><path d="M1086 303 L1120 342 L1200 312" fill="none" stroke="url(#hatch)" stroke-width="16" stroke-linejoin="round"/><path d="M1086 303 L1120 342 L1200 312" fill="none" stroke="#2a1c10" stroke-width=".7" stroke-dasharray="5 1.5"/><path d="M1086 380 L1140 350 L1200 340 L1200 360 L1130 400 L1086 430 Z" fill="#8f7b4b" opacity=".5"/><path d="M1086 380 L1140 350 L1200 340 L1200 360 L1130 400 L1086 430 Z" fill="url(#hatch)" opacity=".9"/><path d="M1090 430 L1200 372" fill="none" stroke="#8f7b4b" stroke-width="14" opacity=".35" stroke-linejoin="round"/><path d="M1090 430 L1200 372" fill="none" stroke="url(#hatch)" stroke-width="14" stroke-linejoin="round"/><path d="M1090 430 L1200 372" fill="none" stroke="#2a1c10" stroke-width=".7" stroke-dasharray="5 1.5"/><path d="M1105 495 L1200 440" fill="none" stroke="#8f7b4b" stroke-width="10" opacity=".35" stroke-linejoin="round"/><path d="M1105 495 L1200 440" fill="none" stroke="url(#hatch)" stroke-width="10" stroke-linejoin="round"/><path d="M1105 495 L1200 440" fill="none" stroke="#2a1c10" stroke-width=".7" stroke-dasharray="5 1.5"/><path d="M1120 540 L1200 480" fill="none" stroke="#8f7b4b" stroke-width="10" opacity=".35" stroke-linejoin="round"/><path d="M1120 540 L1200 480" fill="none" stroke="url(#hatch)" stroke-width="10" stroke-linejoin="round"/><path d="M1120 540 L1200 480" fill="none" stroke="#2a1c10" stroke-width=".7" stroke-dasharray="5 1.5"/><path d="M1130 565 L1200 625" fill="none" stroke="#8f7b4b" stroke-width="14" opacity=".35" stroke-linejoin="round"/><path d="M1130 565 L1200 625" fill="none" stroke="url(#hatch)" stroke-width="14" stroke-linejoin="round"/><path d="M1130 565 L1200 625" fill="none" stroke="#2a1c10" stroke-width=".7" stroke-dasharray="5 1.5"/><path d="M1086 560 L1112 545" fill="none" stroke="#8f7b4b" stroke-width="10" opacity=".35" stroke-linejoin="round"/><path d="M1086 560 L1112 545" fill="none" stroke="url(#hatch)" stroke-width="10" stroke-linejoin="round"/><path d="M1086 560 L1112 545" fill="none" stroke="#2a1c10" stroke-width=".7" stroke-dasharray="5 1.5"/><path d="M1086 630 L1125 669" fill="none" stroke="#8f7b4b" stroke-width="14" opacity=".35" stroke-linejoin="round"/><path d="M1086 630 L1125 669" fill="none" stroke="url(#hatch)" stroke-width="14" stroke-linejoin="round"/><path d="M1086 630 L1125 669" fill="none" stroke="#2a1c10" stroke-width=".7" stroke-dasharray="5 1.5"/><path d="M1150 612 L1200 650" fill="none" stroke="#8f7b4b" stroke-width="14" opacity=".35" stroke-linejoin="round"/><path d="M1150 612 L1200 650" fill="none" stroke="url(#hatch)" stroke-width="14" stroke-linejoin="round"/><path d="M1150 612 L1200 650" fill="none" stroke="#2a1c10" stroke-width=".7" stroke-dasharray="5 1.5"/><path d="M1160 600 L1200 560" fill="none" stroke="#8f7b4b" stroke-width="8" opacity=".35" stroke-linejoin="round"/><path d="M1160 600 L1200 560" fill="none" stroke="url(#hatch)" stroke-width="8" stroke-linejoin="round"/><path d="M1160 600 L1200 560" fill="none" stroke="#2a1c10" stroke-width=".7" stroke-dasharray="5 1.5"/><path d="M1118 65 H1150 L1146 72 L1128 74 Z" fill="#5e4c2c" opacity=".4" filter="url(#blur)"/><path d="M1120 65 H1149 L1146 71 L1129 72 Z" fill="#c4c4c4"/><path d="M1130 118 L1177 103 L1181 123 L1149 133 L1149 139 L1135 144 Z" fill="#5e4c2c" opacity=".7" filter="url(#blur)" transform="translate(2,3)"/><path d="M1130 118 L1177 103 L1181 123 L1149 133 L1149 139 L1135 144 Z" fill="#b4b4b4"/><path d="M1134 112 L1181 97 L1177 103 L1130 118 Z" fill="#c0c0c0"/><path d="M1181 97 L1185 117 L1181 123 L1177 103 Z" fill="#c0c0c0"/><path d="M1185 117 L1153 127 L1149 133 L1181 123 Z" fill="#c0c0c0"/><path d="M1153 127 L1153 133 L1149 139 L1149 133 Z" fill="#c0c0c0"/><path d="M1153 133 L1139 138 L1135 144 L1149 139 Z" fill="#c0c0c0"/><path d="M1139 138 L1134 112 L1130 118 L1135 144 Z" fill="#c0c0c0"/><path d="M1139 138 L1134 112 L1130 118 L1135 144 Z" fill="#ececec"/><path d="M1134 112 L1181 97 L1185 117 L1153 127 L1153 133 L1139 138 Z" fill="#b1a673"/><path d="M1149 199 L1170 194 L1173 211 L1156 218 Z" fill="#5e4c2c" opacity=".7" filter="url(#blur)" transform="translate(2,3)"/><path d="M1149 199 L1170 194 L1173 211 L1156 218 Z" fill="#b4b4b4"/><path d="M1153 193 L1174 188 L1170 194 L1149 199 Z" fill="#c0c0c0"/><path d="M1174 188 L1177 205 L1173 211 L1170 194 Z" fill="#c0c0c0"/><path d="M1177 205 L1160 212 L1156 218 L1173 211 Z" fill="#c0c0c0"/><path d="M1160 212 L1153 193 L1149 199 L1156 218 Z" fill="#c0c0c0"/><path d="M1160 212 L1153 193 L1149 199 L1156 218 Z" fill="#ececec"/><path d="M1153 193 L1174 188 L1177 205 L1160 212 Z" fill="#b1a673"/><path d="M1162 222 L1185 214 L1192 232 L1168 244 Z" fill="#5e4c2c" opacity=".7" filter="url(#blur)" transform="translate(2,3)"/><path d="M1162 222 L1185 214 L1192 232 L1168 244 Z" fill="#b4b4b4"/><path d="M1166 216 L1189 208 L1185 214 L1162 222 Z" fill="#c0c0c0"/><path d="M1189 208 L1196 226 L1192 232 L1185 214 Z" fill="#c0c0c0"/><path d="M1196 226 L1172 238 L1168 244 L1192 232 Z" fill="#c0c0c0"/><path d="M1172 238 L1166 216 L1162 222 L1168 244 Z" fill="#c0c0c0"/><path d="M1172 238 L1166 216 L1162 222 L1168 244 Z" fill="#ececec"/><path d="M1166 216 L1189 208 L1196 226 L1172 238 Z" fill="#b1a673"/><path d="M1124 225 L1143 234 L1127 268 L1107 258 Z" fill="#5e4c2c" opacity=".7" filter="url(#blur)" transform="translate(2,3)"/><path d="M1124 225 L1143 234 L1127 268 L1107 258 Z" fill="#b4b4b4"/><path d="M1128 219 L1147 228 L1143 234 L1124 225 Z" fill="#c0c0c0"/><path d="M1147 228 L1131 262 L1127 268 L1143 234 Z" fill="#c0c0c0"/><path d="M1131 262 L1111 252 L1107 258 L1127 268 Z" fill="#c0c0c0"/><path d="M1111 252 L1128 219 L1124 225 L1107 258 Z" fill="#c0c0c0"/><path d="M1111 252 L1131 262 L1127 268 L1107 258 Z" fill="#ececec"/><path d="M1128 219 L1147 228 L1131 262 L1111 252 Z" fill="#b1a673"/><path d="M1145 278 L1166 292 L1147 319 L1127 304 Z" fill="#5e4c2c" opacity=".7" filter="url(#blur)" transform="translate(2,3)"/><path d="M1145 278 L1166 292 L1147 319 L1127 304 Z" fill="#b4b4b4"/><path d="M1149 272 L1170 286 L1166 292 L1145 278 Z" fill="#c0c0c0"/><path d="M1170 286 L1151 313 L1147 319 L1166 292 Z" fill="#c0c0c0"/><path d="M1151 313 L1131 298 L1127 304 L1147 319 Z" fill="#c0c0c0"/><path d="M1131 298 L1149 272 L1145 278 L1127 304 Z" fill="#c0c0c0"/><path d="M1131 298 L1151 313 L1147 319 L1127 304 Z" fill="#ececec"/><path d="M1149 272 L1170 286 L1151 313 L1131 298 Z" fill="#b1a673"/><path d="M1166 322 L1185 343 L1172 356 L1146 358 L1151 336 Z" fill="#5e4c2c" opacity=".7" filter="url(#blur)" transform="translate(2,3)"/><path d="M1166 322 L1185 343 L1172 356 L1146 358 L1151 336 Z" fill="#b4b4b4"/><path d="M1170 316 L1189 337 L1185 343 L1166 322 Z" fill="#c0c0c0"/><path d="M1189 337 L1176 350 L1172 356 L1185 343 Z" fill="#c0c0c0"/><path d="M1176 350 L1150 352 L1146 358 L1172 356 Z" fill="#c0c0c0"/><path d="M1150 352 L1155 330 L1151 336 L1146 358 Z" fill="#c0c0c0"/><path d="M1155 330 L1170 316 L1166 322 L1151 336 Z" fill="#c0c0c0"/><path d="M1155 330 L1150 352 L1146 358 L1151 336 Z" fill="#ececec"/><path d="M1170 316 L1189 337 L1176 350 L1150 352 L1155 330 Z" fill="#b1a673"/><path d="M1189 331 L1196 327 L1196 351 L1193 354 Z" fill="#5e4c2c" opacity=".7" filter="url(#blur)" transform="translate(2,3)"/><path d="M1189 331 L1196 327 L1196 351 L1193 354 Z" fill="#b4b4b4"/><path d="M1193 325 L1200 321 L1196 327 L1189 331 Z" fill="#c0c0c0"/><path d="M1200 321 L1200 345 L1196 351 L1196 327 Z" fill="#c0c0c0"/><path d="M1200 345 L1197 348 L1193 354 L1196 351 Z" fill="#c0c0c0"/><path d="M1197 348 L1193 325 L1189 331 L1193 354 Z" fill="#c0c0c0"/><path d="M1193 325 L1200 321 L1200 345 L1197 348 Z" fill="#b1a673"/><path d="M1133 351 L1161 344 L1186 342 L1176 362 L1156 364 L1144 368 Z" fill="#5e4c2c" opacity=".7" filter="url(#blur)" transform="translate(2,3)"/><path d="M1133 351 L1161 344 L1186 342 L1176 362 L1156 364 L1144 368 Z" fill="#b4b4b4"/><path d="M1137 345 L1165 338 L1161 344 L1133 351 Z" fill="#c0c0c0"/><path d="M1165 338 L1190 336 L1186 342 L1161 344 Z" fill="#c0c0c0"/><path d="M1190 336 L1180 356 L1176 362 L1186 342 Z" fill="#c0c0c0"/><path d="M1180 356 L1160 358 L1156 364 L1176 362 Z" fill="#c0c0c0"/><path d="M1160 358 L1148 362 L1144 368 L1156 364 Z" fill="#c0c0c0"/><path d="M1148 362 L1137 345 L1133 351 L1144 368 Z" fill="#c0c0c0"/><path d="M1137 345 L1148 362 L1144 368 L1133 351 Z" fill="#ececec"/><path d="M1137 345 L1165 338 L1190 336 L1180 356 L1160 358 L1148 362 Z" fill="#b1a673"/><path d="M1082 354 L1108 366 L1117 376 L1102 398 L1090 396 L1082 402 Z" fill="#5e4c2c" opacity=".7" filter="url(#blur)" transform="translate(2,3)"/><path d="M1082 354 L1108 366 L1117 376 L1102 398 L1090 396 L1082 402 Z" fill="#b4b4b4"/><path d="M1086 348 L1112 360 L1108 366 L1082 354 Z" fill="#c0c0c0"/><path d="M1112 360 L1121 370 L1117 376 L1108 366 Z" fill="#c0c0c0"/><path d="M1121 370 L1106 392 L1102 398 L1117 376 Z" fill="#c0c0c0"/><path d="M1106 392 L1094 390 L1090 396 L1102 398 Z" fill="#c0c0c0"/><path d="M1094 390 L1086 396 L1082 402 L1090 396 Z" fill="#c0c0c0"/><path d="M1086 396 L1086 348 L1082 354 L1082 402 Z" fill="#c0c0c0"/><path d="M1086 396 L1094 390 L1090 396 L1082 402 Z" fill="#ececec"/><path d="M1086 348 L1112 360 L1121 370 L1106 392 L1094 390 L1086 396 Z" fill="#b1a673"/><path d="M1115 412 L1132 398 L1153 420 L1138 430 L1122 426 Z" fill="#5e4c2c" opacity=".7" filter="url(#blur)" transform="translate(2,3)"/><path d="M1115 412 L1132 398 L1153 420 L1138 430 L1122 426 Z" fill="#b4b4b4"/><path d="M1119 406 L1136 392 L1132 398 L1115 412 Z" fill="#c0c0c0"/><path d="M1136 392 L1157 414 L1153 420 L1132 398 Z" fill="#c0c0c0"/><path d="M1157 414 L1142 424 L1138 430 L1153 420 Z" fill="#c0c0c0"/><path d="M1142 424 L1126 420 L1122 426 L1138 430 Z" fill="#c0c0c0"/><path d="M1126 420 L1119 406 L1115 412 L1122 426 Z" fill="#c0c0c0"/><path d="M1119 406 L1126 420 L1122 426 L1115 412 Z" fill="#ececec"/><path d="M1119 406 L1136 392 L1157 414 L1142 424 L1126 420 Z" fill="#b1a673"/><path d="M1082 446 L1105 428 L1124 453 L1120 464 L1095 488 L1082 472 Z" fill="#5e4c2c" opacity=".7" filter="url(#blur)" transform="translate(2,3)"/><path d="M1082 446 L1105 428 L1124 453 L1120 464 L1095 488 L1082 472 Z" fill="#b4b4b4"/><path d="M1086 440 L1109 422 L1105 428 L1082 446 Z" fill="#c0c0c0"/><path d="M1109 422 L1128 447 L1124 453 L1105 428 Z" fill="#c0c0c0"/><path d="M1128 447 L1124 458 L1120 464 L1124 453 Z" fill="#c0c0c0"/><path d="M1124 458 L1099 482 L1095 488 L1120 464 Z" fill="#c0c0c0"/><path d="M1099 482 L1086 466 L1082 472 L1095 488 Z" fill="#c0c0c0"/><path d="M1086 466 L1086 440 L1082 446 L1082 472 Z" fill="#c0c0c0"/><path d="M1086 466 L1099 482 L1095 488 L1082 472 Z" fill="#ececec"/><path d="M1086 440 L1109 422 L1128 447 L1124 458 L1099 482 L1086 466 Z" fill="#b1a673"/><path d="M1153 522 L1179 501 L1194 516 L1171 539 Z" fill="#5e4c2c" opacity=".7" filter="url(#blur)" transform="translate(2,3)"/><path d="M1153 522 L1179 501 L1194 516 L1171 539 Z" fill="#b4b4b4"/><path d="M1157 516 L1183 495 L1179 501 L1153 522 Z" fill="#c0c0c0"/><path d="M1183 495 L1198 510 L1194 516 L1179 501 Z" fill="#c0c0c0"/><path d="M1198 510 L1175 533 L1171 539 L1194 516 Z" fill="#c0c0c0"/><path d="M1175 533 L1157 516 L1153 522 L1171 539 Z" fill="#c0c0c0"/><path d="M1157 516 L1175 533 L1171 539 L1153 522 Z" fill="#ececec"/><path d="M1157 516 L1183 495 L1198 510 L1175 533 Z" fill="#b1a673"/><path d="M1164 577 L1175 565 L1194 580 L1181 600 Z" fill="#5e4c2c" opacity=".7" filter="url(#blur)" transform="translate(2,3)"/><path d="M1164 577 L1175 565 L1194 580 L1181 600 Z" fill="#b4b4b4"/><path d="M1168 571 L1179 559 L1175 565 L1164 577 Z" fill="#c0c0c0"/><path d="M1179 559 L1198 574 L1194 580 L1175 565 Z" fill="#c0c0c0"/><path d="M1198 574 L1185 594 L1181 600 L1194 580 Z" fill="#c0c0c0"/><path d="M1185 594 L1168 571 L1164 577 L1181 600 Z" fill="#c0c0c0"/><path d="M1168 571 L1185 594 L1181 600 L1164 577 Z" fill="#ececec"/><path d="M1168 571 L1179 559 L1198 574 L1185 594 Z" fill="#b1a673"/><path d="M1087 614 L1122 586 L1152 614 L1103 653 Z" fill="#5e4c2c" opacity=".7" filter="url(#blur)" transform="translate(2,3)"/><path d="M1087 614 L1122 586 L1152 614 L1103 653 Z" fill="#b4b4b4"/><path d="M1092 607 L1127 579 L1122 586 L1087 614 Z" fill="#c0c0c0"/><path d="M1127 579 L1157 607 L1152 614 L1122 586 Z" fill="#c0c0c0"/><path d="M1157 607 L1108 646 L1103 653 L1152 614 Z" fill="#c0c0c0"/><path d="M1108 646 L1092 607 L1087 614 L1103 653 Z" fill="#c0c0c0"/><path d="M1092 607 L1108 646 L1103 653 L1087 614 Z" fill="#ececec"/><path d="M1092 607 L1127 579 L1157 607 L1108 646 Z" fill="#b1a673"/><path d="M1132 665 L1145 652 L1154 663 L1142 675 Z" fill="#5e4c2c" opacity=".7" filter="url(#blur)" transform="translate(2,3)"/><path d="M1132 665 L1145 652 L1154 663 L1142 675 Z" fill="#b4b4b4"/><path d="M1136 659 L1149 646 L1145 652 L1132 665 Z" fill="#c0c0c0"/><path d="M1149 646 L1158 657 L1154 663 L1145 652 Z" fill="#c0c0c0"/><path d="M1158 657 L1146 669 L1142 675 L1154 663 Z" fill="#c0c0c0"/><path d="M1146 669 L1136 659 L1132 665 L1142 675 Z" fill="#c0c0c0"/><path d="M1136 659 L1146 669 L1142 675 L1132 665 Z" fill="#ececec"/><path d="M1136 659 L1149 646 L1158 657 L1146 669 Z" fill="#b1a673"/><path d="M1086 615 L1108 646 L1103 653 L1086 630 Z" fill="#ececec"/><path d="M1086 140 Q1099 156 1100 188 Q1101 228 1086 258" fill="none" stroke="#f0f0f0" stroke-width="4"/><path d="M1100 190 L1200 157" fill="none" stroke="#f2f2f2" stroke-width="5.5" stroke-linejoin="round"/><path d="M1091 518 L1200 405" fill="none" stroke="#f2f2f2" stroke-width="5.5" stroke-linejoin="round"/><path d="M1084 512 L1200 625" fill="none" stroke="#f2f2f2" stroke-width="5.5" stroke-linejoin="round"/><path d="M1123 559 L1086 593" fill="none" stroke="#f2f2f2" stroke-width="4.5" stroke-linejoin="round"/><text x="1116" y="187" font-size="7.5" font-family="Liberation Sans" fill="#333" transform="rotate(-17 1104 191)">Van Rhyneveld Street</text><text x="1093" y="262" font-size="7" font-family="Liberation Sans" fill="#222" transform="rotate(-78 1093 262)">Gelderblom Street</text><text x="1125" y="487" font-size="7.5" font-family="Liberation Sans" fill="#222" transform="rotate(-44 1125 487)">Gelderblom Street</text></svg>


<!-- status bar -->
<div class="a" style="left:1086px;top:669px;width:114px;height:36px;background:#ececec"></div>
<div class="a" style="left:1086px;top:669px;width:114px;height:1px;background:#c8c8c8"></div>
<div class="a" style="left:1085px;top:682px;width:55px;height:17px;border:1px solid #d0d0d0;border-left:none;background:#ececec"></div>
<div class="t" style="left:1086px;top:683px;font-size:13px">7 (OTF)</div>
<div class="a" style="left:1147px;top:682px;width:35px;height:17px;border:1px solid #d0d0d0;background:#ececec"></div>
<svg class="a" style="left:1153px;top:683px" width="22" height="16"><path d="M4 2 H17 Q20 2 20 5 V9 Q20 12 17 12 H9 L5 15 L6 12 H4 Q1 12 1 9 V5 Q1 2 4 2 Z" fill="#555"/><circle cx="6.5" cy="7" r="1.3" fill="#fff"/><circle cx="10.5" cy="7" r="1.3" fill="#fff"/><circle cx="14.5" cy="7" r="1.3" fill="#fff"/></svg>

<!-- back dialog -->
<div class="a" style="left:161px;top:65px;width:49px;height:640px;background:#585858;border-bottom-left-radius:6px"></div>
<div class="a" style="left:161px;top:672px;width:145px;height:33px;background:#585858;border-bottom-left-radius:6px"></div>
<div class="a" style="left:306px;top:672px;width:735px;height:7px;background:#d6d6d6"></div>
<div class="a" style="left:306px;top:679px;width:780px;height:26px;background:#ececec"></div>
<div class="a" style="left:1037px;top:65px;width:49px;height:607px;background:#ececec"></div>

<!-- title bar -->
<div class="a" style="left:161px;top:44px;width:925px;height:21px;background:linear-gradient(#ececec 0,#e8e8e8 7px,#eedcee 7px,#eedcee 8px,#dadada 8px,#d6d6d6 100%);border-radius:5px 5px 0 0;border-bottom:1px solid #8e8e8e"></div>

<div class="a" style="left:168px;top:48px;width:12px;height:12px;border-radius:50%;border:1px solid #c8c8c8"></div>
<div class="a" style="left:187px;top:48px;width:12px;height:12px;border-radius:50%;border:1px solid #c8c8c8"></div>
<div class="a" style="left:207px;top:48px;width:11px;height:12px;border-radius:50%;background:#2ec540"></div>
<svg class="a" style="left:505px;top:47px" width="14" height="16"><path d="M3 12 C1 8 3 3 7 2 C9 4 9 9 6 13 Z" fill="#d6e04a" stroke="#6a8a20" stroke-width=".8"/><path d="M4 13 L12 1" stroke="#2a7a2a" stroke-width="1.6"/></svg>
<div class="t" style="left:523px;top:48px;font-size:13px;color:#222">Layer Properties - Background | Style</div>


<!-- sidebar items -->
<div class="a" style="left:161px;top:99px;width:47px;height:34px;background:#ececec"></div>
<div class="a" style="left:210px;top:65px;width:19px;height:540px;background:#ececec"></div>

<svg class="a" style="left:165px;top:68px" width="28" height="28"><path d="M4 5 L20 21" stroke="#ddd" stroke-width="2.2"/><path d="M3 24 L12 15" stroke="#3a6ab0" stroke-width="4" stroke-linecap="round"/><path d="M13 14 L23 24" stroke="#f08a10" stroke-width="4.5" stroke-linecap="round"/><path d="M10 6 C14 2 20 3 23 8 L24 12 L21 11 C19 8 16 7 13 9 Z" fill="#333"/></svg>
<svg class="a" style="left:166px;top:102px" width="28" height="28"><path d="M3 9 L17 5 L20 20 L6 24 Z" fill="#f2d060"/><path d="M3 9 L12 7 L15 22 L6 24 Z" fill="#e05050" opacity=".75"/><path d="M9 14 L24 5" stroke="#d6b060" stroke-width="3"/><path d="M10 16 C7 20 8 23 13 24 C17 21 17 18 14 15 Z" fill="#e8c878" stroke="#b08a40" stroke-width=".6"/></svg>
<svg class="a" style="left:165px;top:141px" width="28" height="20"><path d="M2 10 L8 3 H26 V17 H8 Z" fill="#f4d030" stroke="#b89010" stroke-width="1"/><text x="9" y="14" font-size="9" font-family="Liberation Sans" font-weight="bold" fill="#222">abc</text></svg>
<svg class="a" style="left:167px;top:173px" width="24" height="22"><rect x="1" y="1" width="22" height="20" fill="#e8e8d8" stroke="#888"/><rect x="1" y="1" width="22" height="4" fill="#6a8ac8"/><path d="M1 9 H23 M1 13 H23 M1 17 H23 M8 5 V21 M15 5 V21" stroke="#99a" stroke-width=".8"/></svg>
<svg class="a" style="left:166px;top:205px" width="26" height="26"><path d="M8 18 L22 4" stroke="#d6b060" stroke-width="3"/><path d="M9 14 C4 17 4 21 7 24 C12 24 14 20 12 16 Z" fill="#e8c070" stroke="#a07830" stroke-width=".7"/></svg>
<svg class="a" style="left:165px;top:241px" width="26" height="24"><path d="M3 3 H23 Q25 3 25 5 V14 Q25 16 23 16 H11 L6 22 L7 16 H3 Q1 16 1 14 V5 Q1 3 3 3 Z" fill="#f4d878" stroke="#d0b040" stroke-width=".8"/><path d="M5 6 V12" stroke="#fff" stroke-width="1.2"/></svg>
<svg class="a" style="left:165px;top:274px" width="26" height="26"><circle cx="16" cy="11" r="8" fill="#d8d8d8" stroke="#eee" stroke-width="2.5" stroke-dasharray="3 2"/><circle cx="16" cy="11" r="5.5" fill="#5a8ad0"/><path d="M14 8 L19 11 L14 14 Z" fill="#fff"/><circle cx="5" cy="21" r="3.5" fill="#5a8ad0" stroke="#ccc" stroke-width="1.2"/></svg>
<svg class="a" style="left:165px;top:309px" width="26" height="24"><path d="M4 12 L20 2 V22 Z" fill="#4a7ac0"/><path d="M12 12 L20 2 L23 12 L20 22 Z" fill="#7aa0d8"/><circle cx="3" cy="12" r="2.2" fill="#4a7ac0"/><path d="M3 12 H10" stroke="#4a7ac0" stroke-width="1.5"/></svg>
<svg class="a" style="left:165px;top:345px" width="26" height="20"><rect x="1" y="2" width="24" height="16" fill="#e4e4e4" stroke="#fff" stroke-width="1"/><path d="M2 12 Q8 8 12 14 T24 10" fill="#bbb"/><circle cx="13" cy="10" r="5" fill="#e8c030"/><path d="M13 10 V5 A5 5 0 0 1 18 10 Z" fill="#d03030"/><path d="M13 10 H18 A5 5 0 0 1 13 15 Z" fill="#3050b0"/></svg>
<svg class="a" style="left:165px;top:377px" width="26" height="26"><circle cx="13" cy="13" r="11.5" fill="#5a8ad0" stroke="#8ab0e0" stroke-width="1"/><circle cx="14.5" cy="7" r="2" fill="#fff"/><path d="M11 11 H15 L13 19 H16" stroke="#fff" stroke-width="2.5" fill="none"/></svg>
<svg class="a" style="left:167px;top:411px" width="22" height="26"><path d="M17 6 Q15 2.5 10.5 3 Q5 3.5 5.5 8 Q6 11 10 11.5 Q4 12 4 16.5 Q4.5 21 10.5 21 Q15 21 17 18" stroke="#5a3a8a" stroke-width="2.2" fill="none"/></svg>
<svg class="a" style="left:166px;top:446px" width="24" height="24"><rect x="2" y="2" width="6" height="6" fill="#f0c020"/><rect x="2" y="9" width="6" height="6" fill="#e04020"/><rect x="2" y="16" width="6" height="6" fill="#30a040"/><path d="M10 6 H20 M10 12 H22 M10 19 H18" stroke="#999" stroke-width="1.8"/></svg>

<!-- sidebar labels -->
<div class="a" style="left:161px;top:65px;width:49px;height:420px;overflow:hidden"><div class="t" style="left:37px;top:9px;font-size:13px;color:#f4f4f4">General</div><div class="t" style="left:44px;top:43px;font-size:13px;color:#111">Style</div><div class="t" style="left:37px;top:78px;font-size:13px;color:#f4f4f4">Labels</div><div class="t" style="left:37px;top:112px;font-size:13px;color:#f4f4f4">Fields</div><div class="t" style="left:37px;top:146px;font-size:13px;color:#f4f4f4">Rendering</div><div class="t" style="left:37px;top:180px;font-size:13px;color:#f4f4f4">Display</div><div class="t" style="left:37px;top:215px;font-size:13px;color:#f4f4f4">Actions</div><div class="t" style="left:37px;top:249px;font-size:13px;color:#f4f4f4">Joins</div><div class="t" style="left:37px;top:283px;font-size:13px;color:#f4f4f4">Diagram</div><div class="t" style="left:37px;top:318px;font-size:13px;color:#f4f4f4">Metadata</div><div class="t" style="left:37px;top:352px;font-size:13px;color:#f4f4f4">Variable</div><div class="t" style="left:37px;top:385px;font-size:13px;color:#f4f4f4">Legend</div></div>
<!-- front dialog content -->
<div id="dlg" class="a" style="left:210px;top:65px;width:827px;height:607px;background:#ececec;border-right:1px solid #b4b4b4"></div>


<!-- ===== front dialog content ===== -->
<div class="t" style="left:229px;top:92px;font-size:12px">Color 1</div>
<div class="a" style="left:277px;top:86px;width:113px;height:26px;background:#a9cdf6;border:1px solid #7fa9dc;border-radius:2px"></div>
<div class="a" style="left:281px;top:89px;width:96px;height:20px;background:#fff;border-radius:3px"></div><div class="a" style="left:282px;top:91px;width:93px;height:16px;background:#0a0aee;border-radius:3px"></div>
<div class="a" style="left:379px;top:88px;width:1px;height:22px;background:#7fa9dc"></div>
<div class="a" style="left:381px;top:88px;width:7px;height:20px;background:#f2f2f2"></div>
<div class="a" style="left:382px;top:103px;width:0;height:0;border-left:3px solid transparent;border-right:3px solid transparent;border-top:3px solid #333"></div>

<div class="t" style="left:401px;top:92px;font-size:12px">Color 2</div>
<div class="a" style="left:448px;top:86px;width:113px;height:26px;background:#ececec;border:1px solid #b4b4b4"></div>
<div class="a" style="left:453px;top:91px;width:93px;height:16px;background:#55ff0a;border-radius:3px;border-bottom:1px solid #3dc010"></div>
<div class="a" style="left:550px;top:87px;width:1px;height:24px;background:#b4b4b4"></div>
<div class="a" style="left:553px;top:103px;width:0;height:0;border-left:3px solid transparent;border-right:3px solid transparent;border-top:3px solid #333"></div>

<div class="t" style="left:573px;top:92px;font-size:12px">Type</div>
<div class="a" style="left:606px;top:90px;width:373px;height:19px;background:#ececec;border:1px solid #b8b8b8;border-radius:3px"></div>
<div class="t" style="left:615px;top:92.5px;font-size:12px">Continuous</div>
<div class="a" style="left:963px;top:90px;width:16px;height:19px;background:linear-gradient(#6cb3fa,#2a7fef);border-radius:0 3px 3px 0"></div>
<svg class="a" style="left:963px;top:90px" width="16" height="19"><path d="M5 8 L8 5 L11 8 M5 11 L8 14 L11 11" stroke="#fff" stroke-width="1.3" fill="none"/></svg>

<!-- gradient bar -->
<div class="a" style="left:234px;top:126px;width:779px;height:59px;border:1px solid #9a9a9a;border-bottom:none"></div>
<div class="a" style="left:235px;top:127px;width:778px;height:58px;display:flex">
 <div style="width:180px;background:#0a0aee"></div>
 <div style="width:48px;background:#1c52d8"></div>
 <div style="width:46px;background:#1a57b0"></div>
 <div style="width:44px;background:#1e64a4"></div>
 <div style="width:52px;background:#1e7294"></div>
 <div style="width:37px;background:#1e8484"></div>
 <div style="width:142px;background:#28a064"></div>
 <div style="width:24px;background:#32bb32"></div>
 <div style="width:179px;background:#38dc0a"></div>
 <div style="width:25px;background:#55ff0a"></div>
</div>
<div class="a" style="left:415px;top:127px;width:10px;height:11px;background:#0a0aee"></div>
<div class="a" style="left:454px;top:127px;width:61px;height:11px;background:#1a50b8"></div>
<div class="a" style="left:515px;top:127px;width:33px;height:11px;background:#1a64a8"></div>
<div class="a" style="left:548px;top:127px;width:64px;height:11px;background:#1e7294"></div><div class="a" style="left:636px;top:127px;width:6px;height:11px;background:#28a064"></div>
<div class="a" style="left:612px;top:127px;width:24px;height:11px;background:#1e8080"></div>
<div class="a" style="left:424px;top:127px;width:40px;height:10px;overflow:hidden"><div class="t" style="left:1px;top:-3px;font-size:12px;color:#0c1c80">urst I</div></div>
<!-- stop markers -->
<svg class="a" style="left:230px;top:184px" width="16" height="18"><path d="M1.5 16.5 V7 L7.5 1.5 L13.5 7 V16.5 Z" fill="#0a0aee" stroke="#111" stroke-width="1.3"/></svg>
<svg class="a" style="left:1003px;top:184px" width="16" height="18"><path d="M2.5 16.5 V7 L7.5 2 L12.5 7 V16.5 Z" fill="#fff" stroke="#8a8a8a" stroke-width="1.2"/><path d="M4 15 V7.8 L7.5 4 L11 7.8 V15 Z" fill="#55ff0a"/></svg>
<!-- cursor -->
<svg class="a" style="left:379px;top:162px" width="14" height="20"><path d="M1.5 1 V15 L4.8 11.8 L7.3 17.5 L9.6 16.5 L7.2 11 L11.5 11 Z" fill="#111" stroke="#fff" stroke-width="1"/></svg>

<!-- gradient stop heading -->
<svg class="a" style="left:231px;top:213px" width="13" height="10"><path d="M1 1 H12 L6.5 8 Z" fill="#444"/></svg>
<div class="t" style="left:250px;top:213px;font-size:12px;font-weight:bold">Gradient stop</div>


<!-- group box -->
<div class="a" style="left:229px;top:228px;width:774px;height:375px;border:1px solid #c4c4c4;border-radius:5px 5px 0 0;border-bottom:none"></div>
<div class="a" style="left:230px;top:229px;width:76px;height:374px;background:#d4d4d4;border-top-left-radius:4px"></div>
<div class="a" style="left:306px;top:285px;width:369px;height:303px;background:#d4d4d4;border-radius:0 0 4px 0"></div>
<div class="t" style="left:242px;top:244px;font-size:12px">Relative position</div>
<div class="a" style="left:342px;top:242px;width:94px;height:20px;background:#ececec;border:1px solid #c8c8c8"></div>
<div class="t" style="left:344px;top:245px;font-size:12px;color:#222">0,0 %</div>
<div class="a" style="left:439px;top:242px;width:12px;height:20px;border:1px solid #c8c8c8;border-radius:4px"></div>
<svg class="a" style="left:439px;top:242px" width="12" height="20"><path d="M3.5 7 L6 4.5 L8.5 7 M3.5 13 L6 15.5 L8.5 13" stroke="#777" stroke-width="1" fill="none"/></svg>
<div class="a" style="left:465px;top:242px;width:92px;height:20px;border:1px solid #cdcdcd;border-radius:4px;background:#ececec"></div>
<div class="t" style="left:480px;top:244px;font-size:12px;color:#888">Delete stop</div>
<div class="t" style="left:320px;top:273px;font-size:12px;color:#d9d3d9">Symbol layer ty</div>
<div class="t" style="left:701px;top:273px;font-size:12px;color:#d9d3d9">Shapeburst fill</div>

<!-- tab bar -->
<div class="a" style="left:397px;top:276px;width:122px;height:20px;background:#f4f4f4;border:1px solid #c4c4c4;border-radius:4px"></div>
<div class="a" style="left:397px;top:276px;width:40px;height:20px;background:linear-gradient(#6db4fb,#2b84f2);border-radius:4px 0 0 4px"></div>
<div class="a" style="left:407px;top:279px;width:14px;height:13px;background:linear-gradient(to right,#fff,rgba(255,255,255,0)),linear-gradient(#f33,#f3f,#33f,#3ff,#3f3,#ff3);border:1px solid #777"></div>
<svg class="a" style="left:448px;top:278px" width="16" height="16"><circle cx="8" cy="8" r="6" fill="none" stroke="url(#cw)" stroke-width="2.5"/><defs><linearGradient id="cw"><stop offset="0" stop-color="#f0f"/><stop offset=".5" stop-color="#0f0"/><stop offset="1" stop-color="#fa0"/></linearGradient></defs><path d="M6 4.5 L11.5 8 L6 11.5 Z" fill="#e33"/></svg>
<svg class="a" style="left:490px;top:279px" width="14" height="14"><rect x=".5" y=".5" width="13" height="13" fill="#fff" stroke="#888"/><rect x="2" y="2" width="3" height="3" fill="#d22"/><rect x="5.5" y="2" width="3" height="3" fill="#e80"/><rect x="9" y="2" width="3" height="3" fill="#fc0"/><rect x="2" y="5.5" width="3" height="3" fill="#a22"/><rect x="5.5" y="5.5" width="3" height="3" fill="#e6a"/><rect x="9" y="5.5" width="3" height="3" fill="#c8e"/><rect x="2" y="9" width="3" height="3" fill="#33c"/><rect x="5.5" y="9" width="3" height="3" fill="#66d"/><rect x="9" y="9" width="3" height="3" fill="#99e"/></svg>

<!-- color square -->
<div class="a" style="left:264px;top:312px;width:361px;height:254px;border:1px solid #a8a8a8;background:#ececec"></div>
<!--SQ--><svg class="a" style="left:265px;top:313px" width="359" height="252" shape-rendering="crispEdges"><path fill="#f8d0d0" d="M48 0h32v2h-32zM48 2h34v2h-34zM50 4h34v2h-34zM52 6h34v2h-34zM52 8h36v2h-36zM56 10h36v2h-36zM58 12h36v2h-36zM62 14h34v2h-34zM66 16h34v2h-34zM70 18h32v2h-32zM76 20h30v2h-30zM82 22h28v2h-28zM88 24h18v2h-18zM98 26h4v2h-4zM90 228h4v2h-4zM82 230h12v2h-12zM74 232h20v2h-20zM68 234h26v2h-26zM64 236h30v2h-30zM60 238h34v2h-34zM56 240h36v2h-36zM54 242h36v2h-36zM52 244h36v2h-36zM50 246h36v2h-36zM50 248h34v2h-34zM48 250h34v2h-34z"/><path fill="#f0c8c8" d="M80 0h20v2h-20zM82 2h20v2h-20zM84 4h20v2h-20zM86 6h20v2h-20zM88 8h22v2h-22zM92 10h20v2h-20zM94 12h22v2h-22zM96 14h22v2h-22zM100 16h22v2h-22zM102 18h24v2h-24zM106 20h14v2h-14zM92 240h2v2h-2zM90 242h6v2h-6zM88 244h10v2h-10zM86 246h14v2h-14zM84 248h18v2h-18zM82 250h18v2h-18z"/><path fill="#f8a8a8" d="M100 0h48v2h-48zM102 2h50v2h-50zM104 4h54v2h-54zM106 6h56v2h-56zM110 8h58v2h-58zM112 10h62v2h-62zM116 12h62v2h-62zM118 14h62v2h-62zM122 16h62v2h-62zM126 18h60v2h-60zM138 20h50v2h-50zM158 22h32v2h-32zM104 248h32v2h-32zM100 250h48v2h-48z"/><path fill="#f89080" d="M148 0h44v2h-44zM152 2h44v2h-44zM158 4h34v2h-34zM162 6h26v2h-26zM168 8h16v2h-16zM174 10h6v2h-6zM174 242h26v2h-26zM164 244h46v2h-46zM156 246h48v2h-48zM152 248h46v2h-46zM148 250h46v2h-46z"/><path fill="#f87060" d="M192 0h66v2h-66zM196 2h62v2h-62zM214 4h44v2h-44zM234 6h24v2h-24zM260 234h14v2h-14zM248 236h30v2h-30zM236 238h44v2h-44zM226 240h58v2h-58zM216 242h66v2h-66zM210 244h68v2h-68zM204 246h70v2h-70zM198 248h74v2h-74zM194 250h74v2h-74z"/><path fill="#f82060" d="M258 0h26v2h-26zM258 2h38v2h-38zM258 4h54v2h-54zM258 6h68v2h-68zM258 8h86v2h-86zM264 10h95v2h-95zM270 12h89v2h-89zM276 14h83v2h-83zM292 16h67v2h-67zM316 18h43v2h-43zM346 20h13v2h-13z"/><path fill="#f82010" d="M284 0h72v2h-72zM342 244h17v2h-17zM322 246h37v2h-37zM306 248h53v2h-53zM292 250h67v2h-67z"/><path fill="#f01818" d="M356 0h3v2h-3zM296 2h63v2h-63zM312 4h47v2h-47zM326 6h33v2h-33zM344 8h15v2h-15z"/><path fill="#f0e8e8" d="M0 0h48v4h-48zM0 4h50v2h-50zM0 6h52v6h-52zM0 12h50v2h-50zM0 14h48v4h-48zM0 18h46v4h-46zM0 22h44v4h-44zM0 26h42v4h-42zM0 30h40v6h-40zM0 36h38v4h-38zM0 40h36v16h-36zM0 56h34v2h-34zM0 58h30v2h-30zM0 60h26v2h-26zM0 62h24v2h-24zM0 64h22v2h-22zM0 66h20v2h-20zM0 68h18v4h-18zM0 72h16v4h-16zM0 76h14v4h-14zM0 80h12v50h-12zM0 130h14v6h-14zM0 136h16v4h-16zM0 140h18v2h-18zM0 142h20v4h-20zM0 146h22v2h-22zM0 148h24v2h-24zM0 150h28v2h-28zM0 152h30v18h-30zM0 170h32v2h-32zM0 172h34v4h-34zM0 176h36v8h-36zM0 184h38v10h-38zM0 194h40v16h-40zM0 210h42v6h-42zM0 216h44v6h-44zM0 222h46v6h-46zM0 228h48v4h-48zM0 232h50v6h-50zM0 238h52v8h-52zM0 246h50v4h-50zM0 250h48v2h-48z"/><path fill="#f86090" d="M192 4h22v2h-22zM188 6h46v2h-46zM184 8h74v2h-74zM180 10h84v2h-84zM178 12h92v2h-92zM180 14h96v2h-96zM184 16h94v2h-94zM186 18h88v2h-88zM188 20h82v2h-82zM190 22h76v2h-76zM204 24h58v2h-58zM232 26h26v2h-26z"/><path fill="#f0d4f0" d="M52 10h4v2h-4zM50 12h8v2h-8zM48 14h14v2h-14zM48 16h18v2h-18zM46 18h24v2h-24zM46 20h30v2h-30zM44 22h38v2h-38zM44 24h44v2h-44zM42 26h56v2h-56zM42 28h60v2h-60zM40 30h62v6h-62zM38 36h64v4h-64zM36 40h68v4h-68zM36 44h66v6h-66zM36 50h64v6h-64zM38 56h60v2h-60zM40 58h52v2h-52zM42 60h42v2h-42zM44 62h34v2h-34zM48 64h24v2h-24zM50 66h18v2h-18zM54 68h10v2h-10z"/><path fill="#f020a0" d="M278 16h14v2h-14zM274 18h42v2h-42zM270 20h76v2h-76zM266 22h93v2h-93zM262 24h97v2h-97zM258 26h101v4h-101zM270 30h89v2h-89zM340 32h19v2h-19z"/><path fill="#e8a0ec" d="M120 20h18v2h-18zM110 22h48v2h-48zM106 24h76v2h-76zM102 26h80v4h-80zM102 30h78v8h-78zM102 38h76v2h-76zM104 40h74v4h-74zM102 44h76v6h-76zM100 50h78v6h-78zM98 56h80v2h-80zM100 58h78v2h-78zM102 60h76v2h-76zM106 62h54v2h-54zM110 64h22v2h-22z"/><path fill="#e860f0" d="M182 24h22v2h-22zM182 26h50v2h-50zM182 28h76v2h-76zM180 30h90v2h-90zM180 32h96v6h-96zM178 38h98v18h-98zM178 56h74v2h-74zM178 58h44v2h-44zM178 60h20v2h-20z"/><path fill="#e818f0" d="M276 32h64v2h-64zM276 34h83v10h-83zM276 44h72v2h-72zM276 46h58v2h-58zM276 48h44v2h-44zM276 50h32v2h-32zM276 52h20v2h-20zM276 54h8v2h-8z"/><path fill="#e010f0" d="M348 44h11v2h-11zM334 46h25v2h-25zM320 48h39v2h-39zM308 50h51v2h-51zM296 52h63v2h-63zM284 54h48v2h-48z"/><path fill="#9010f8" d="M332 54h27v2h-27zM286 56h73v2h-73zM284 58h75v4h-75zM282 62h77v2h-77zM280 64h79v2h-79zM280 66h66v2h-66zM278 68h42v2h-42zM280 70h18v2h-18z"/><path fill="#e0e8f8" d="M34 56h4v2h-4zM30 58h10v2h-10zM26 60h16v2h-16zM24 62h20v2h-20zM22 64h26v2h-26zM20 66h30v2h-30zM18 68h36v2h-36zM18 70h42v2h-42zM16 72h42v4h-42zM14 76h42v2h-42zM14 78h40v2h-40zM12 80h42v2h-42zM12 82h40v4h-40zM12 86h42v2h-42zM12 88h44v2h-44zM12 90h46v2h-46zM12 92h48v2h-48zM12 94h50v2h-50zM12 96h52v2h-52zM12 98h54v2h-54zM12 100h56v4h-56zM12 104h54v2h-54zM12 106h52v2h-52zM12 108h50v2h-50zM12 110h48v4h-48zM12 114h46v2h-46zM12 116h44v2h-44zM12 118h42v4h-42zM12 122h40v2h-40zM12 124h38v4h-38zM12 128h36v2h-36zM14 130h34v2h-34zM14 132h32v4h-32zM16 136h28v2h-28zM16 138h26v2h-26zM18 140h20v2h-20zM20 142h16v2h-16zM20 144h14v2h-14zM22 146h12v2h-12zM24 148h8v2h-8zM28 150h2v2h-2z"/><path fill="#9860f8" d="M252 56h34v2h-34zM222 58h62v2h-62zM198 60h86v2h-86zM184 62h98v2h-98zM182 64h98v2h-98zM184 66h96v2h-96zM184 68h94v2h-94zM186 70h86v2h-86zM188 72h66v2h-66zM190 74h48v2h-48zM192 76h34v2h-34zM194 78h18v2h-18zM196 80h6v2h-6z"/><path fill="#d0d0f8" d="M92 58h8v2h-8zM84 60h18v2h-18zM78 62h28v2h-28zM72 64h38v2h-38zM68 66h44v2h-44zM64 68h46v2h-46zM60 70h46v2h-46zM58 72h46v2h-46zM58 74h42v2h-42zM56 76h42v2h-42zM54 78h42v2h-42zM54 80h40v2h-40zM52 82h38v4h-38zM54 86h36v2h-36zM56 88h34v2h-34zM58 90h32v2h-32zM60 92h30v2h-30zM62 94h28v2h-28zM64 96h26v2h-26zM66 98h24v2h-24zM68 100h22v2h-22zM72 102h18v2h-18zM78 104h12v2h-12zM86 106h4v2h-4z"/><path fill="#a8a8f8" d="M160 62h24v2h-24zM152 64h30v2h-30zM148 66h28v2h-28zM144 68h28v2h-28zM140 70h26v2h-26zM136 72h26v2h-26zM132 74h26v2h-26zM128 76h26v2h-26zM126 78h24v2h-24zM122 80h24v2h-24zM120 82h22v2h-22zM118 84h22v2h-22zM120 86h24v2h-24zM124 88h24v2h-24zM128 90h24v2h-24zM130 92h22v2h-22zM134 94h16v2h-16zM138 96h10v2h-10zM142 98h4v2h-4z"/><path fill="#b0b0f8" d="M132 64h20v2h-20zM112 66h36v2h-36zM110 68h34v2h-34zM106 70h34v2h-34zM104 72h32v2h-32zM100 74h32v2h-32zM98 76h30v2h-30zM96 78h30v2h-30zM94 80h28v2h-28zM90 82h30v2h-30zM90 84h28v2h-28zM94 86h26v2h-26zM100 88h24v2h-24zM106 90h22v2h-22zM112 92h18v2h-18zM118 94h16v2h-16zM126 96h12v2h-12zM136 98h6v2h-6z"/><path fill="#9090f8" d="M176 66h8v2h-8zM172 68h12v2h-12zM166 70h20v2h-20zM162 72h26v2h-26zM158 74h32v2h-32zM154 76h38v2h-38zM150 78h44v2h-44zM146 80h50v2h-50zM142 82h52v2h-52zM140 84h50v2h-50zM144 86h46v2h-46zM148 88h42v2h-42zM152 90h38v2h-38zM168 92h22v2h-22z"/><path fill="#5010f8" d="M346 66h13v2h-13zM320 68h39v2h-39zM298 70h61v2h-61zM290 72h69v4h-69zM290 76h66v2h-66zM290 78h46v2h-46zM290 80h28v2h-28zM290 82h12v2h-12z"/><path fill="#6060f8" d="M272 70h8v2h-8zM254 72h24v2h-24zM238 74h32v2h-32zM226 76h36v2h-36zM212 78h44v2h-44zM202 80h48v2h-48zM194 82h50v2h-50zM192 84h48v2h-48zM202 86h44v2h-44zM214 88h40v2h-40zM226 90h34v2h-34zM238 92h20v2h-20z"/><path fill="#5050f0" d="M278 72h12v2h-12zM270 74h20v2h-20zM262 76h28v2h-28zM256 78h34v2h-34zM250 80h40v2h-40zM244 82h46v2h-46zM240 84h52v2h-52zM246 86h54v2h-54zM254 88h48v2h-48zM260 90h32v2h-32z"/><path fill="#1010f8" d="M356 76h3v2h-3zM336 78h23v2h-23zM318 80h41v2h-41zM302 82h57v2h-57zM292 84h66v2h-66zM300 86h59v2h-59zM312 88h47v2h-47zM326 90h33v2h-33zM344 92h15v2h-15z"/><path fill="#6090f8" d="M190 84h2v2h-2zM190 86h12v2h-12zM190 88h24v2h-24zM190 90h36v2h-36zM190 92h48v2h-48zM192 94h62v2h-62zM198 96h60v2h-60zM202 98h60v2h-60zM208 100h52v2h-52zM216 102h40v2h-40zM222 104h32v2h-32zM230 106h22v2h-22zM238 108h10v2h-10z"/><path fill="#0a0aee" d="M358 84h1v2h-1z"/><path fill="#b0d0f8" d="M90 86h4v2h-4zM90 88h10v2h-10zM90 90h16v2h-16zM90 92h22v2h-22zM90 94h28v2h-28zM90 96h36v2h-36zM90 98h46v2h-46zM90 100h56v2h-56zM90 102h60v2h-60zM90 104h62v2h-62zM90 106h66v2h-66zM92 108h68v2h-68zM94 110h70v2h-70zM98 112h22v2h-22z"/><path fill="#1a50d8" d="M302 88h10v2h-10zM302 90h24v2h-24zM312 92h32v2h-32zM322 94h37v2h-37zM334 96h25v2h-25zM346 98h13v2h-13zM358 100h1v2h-1z"/><path fill="#3070f0" d="M292 90h10v2h-10zM258 92h54v2h-54zM254 94h68v2h-68zM258 96h76v2h-76zM270 98h76v2h-76zM290 100h68v2h-68zM316 102h43v2h-43zM344 104h15v2h-15z"/><path fill="#80b0f8" d="M152 92h16v2h-16zM150 94h42v2h-42zM148 96h50v2h-50zM146 98h56v2h-56zM146 100h62v2h-62zM150 102h66v2h-66zM152 104h70v2h-70zM156 106h74v2h-74zM160 108h78v2h-78zM164 110h68v2h-68zM174 112h50v2h-50z"/><path fill="#3098f8" d="M262 98h8v2h-8zM260 100h30v2h-30zM256 102h60v2h-60zM254 104h90v2h-90zM252 106h107v2h-107zM250 108h109v2h-109zM276 110h83v2h-83zM304 112h55v2h-55zM340 114h19v2h-19z"/><path fill="#d0f0f0" d="M68 102h4v2h-4zM66 104h12v2h-12zM64 106h22v2h-22zM62 108h30v2h-30zM60 110h34v2h-34zM60 112h38v2h-38zM58 114h42v2h-42zM56 116h44v2h-44zM54 118h46v4h-46zM52 122h48v2h-48zM50 124h50v4h-50zM48 128h52v4h-52zM46 132h54v6h-54zM48 138h50v2h-50zM52 140h42v2h-42zM56 142h32v2h-32zM60 144h24v2h-24zM66 146h14v2h-14zM74 148h2v2h-2z"/><path fill="#38d8f8" d="M248 108h2v2h-2zM232 110h44v2h-44zM224 112h80v2h-80zM230 114h110v2h-110zM236 116h123v2h-123zM242 118h117v2h-117zM248 120h111v2h-111zM254 122h105v2h-105zM262 124h97v2h-97zM268 126h91v2h-91zM274 128h85v2h-85zM278 130h81v2h-81zM286 132h73v2h-73zM296 134h63v2h-63zM304 136h55v2h-55zM316 138h43v2h-43z"/><path fill="#a0f0f0" d="M120 112h54v2h-54zM100 114h82v16h-82zM100 130h80v4h-80zM100 134h78v2h-78zM100 136h76v2h-76zM102 138h72v2h-72zM110 140h42v2h-42zM118 142h16v2h-16z"/><path fill="#60f0e8" d="M182 114h48v2h-48zM182 116h54v2h-54zM182 118h60v2h-60zM182 120h66v2h-66zM182 122h72v2h-72zM182 124h80v2h-80zM182 126h86v2h-86zM182 128h92v2h-92zM180 130h98v2h-98zM180 132h66v2h-66zM178 134h10v2h-10z"/><path fill="#60f0e0" d="M246 132h40v2h-40zM188 134h108v2h-108zM176 136h128v2h-128zM174 138h142v2h-142zM178 140h106v2h-106zM184 142h66v2h-66z"/><path fill="#d8f0e8" d="M44 136h2v2h-2zM42 138h6v2h-6zM38 140h14v2h-14zM36 142h20v2h-20zM34 144h26v2h-26zM34 146h32v2h-32zM32 148h42v2h-42zM30 150h44v2h-44zM30 152h42v2h-42zM30 154h40v2h-40zM30 156h38v2h-38zM30 158h36v2h-36zM30 160h34v2h-34zM30 162h32v2h-32zM30 164h30v4h-30zM30 168h28v2h-28zM32 170h28v2h-28zM34 172h28v2h-28zM34 174h30v2h-30z"/><path fill="#c0f8d0" d="M98 138h4v2h-4zM94 140h16v2h-16zM88 142h30v2h-30zM84 144h40v2h-40zM80 146h42v2h-42zM76 148h42v2h-42zM74 150h42v2h-42zM72 152h42v2h-42zM70 154h42v2h-42zM68 156h42v2h-42zM66 158h42v2h-42zM64 160h42v2h-42zM62 162h44v2h-44zM60 164h44v2h-44zM60 166h42v2h-42zM58 168h42v2h-42zM60 170h40v2h-40zM62 172h38v2h-38zM64 174h36v2h-36zM66 176h34v2h-34zM70 178h30v2h-30zM74 180h24v2h-24zM80 182h14v2h-14z"/><path fill="#a0f8c0" d="M152 140h26v2h-26zM134 142h50v2h-50zM124 144h62v2h-62zM122 146h58v2h-58zM118 148h56v2h-56zM116 150h54v2h-54zM114 152h50v2h-50zM112 154h48v2h-48zM110 156h46v2h-46zM108 158h44v2h-44zM106 160h42v2h-42zM106 162h38v2h-38zM104 164h36v2h-36zM102 166h34v2h-34z"/><path fill="#60ff90" d="M284 140h75v2h-75zM250 142h109v2h-109zM224 144h135v2h-135zM220 146h132v2h-132zM216 148h116v2h-116zM212 150h100v2h-100zM208 152h88v2h-88zM204 154h76v2h-76zM200 156h66v2h-66zM198 158h56v2h-56zM194 160h50v2h-50zM190 162h42v2h-42zM188 164h36v2h-36zM184 166h30v2h-30zM184 168h26v2h-26zM190 170h22v2h-22zM196 172h18v2h-18zM204 174h12v2h-12zM210 176h8v2h-8zM218 178h2v2h-2z"/><path fill="#80f8a0" d="M186 144h38v2h-38zM180 146h40v2h-40zM174 148h42v2h-42zM170 150h42v2h-42zM164 152h44v2h-44zM160 154h44v2h-44zM156 156h44v2h-44zM152 158h46v2h-46zM148 160h46v2h-46zM144 162h46v2h-46zM140 164h48v2h-48zM136 166h48v4h-48zM142 170h48v2h-48zM150 172h46v2h-46zM158 174h46v2h-46zM168 176h42v2h-42zM178 178h40v2h-40zM190 180h34v2h-34zM204 182h24v2h-24zM220 184h12v2h-12z"/><path fill="#50ff50" d="M352 146h7v2h-7zM332 148h27v2h-27zM312 150h47v2h-47zM296 152h63v2h-63zM280 154h79v2h-79zM266 156h93v2h-93zM254 158h105v2h-105zM244 160h112v2h-112zM232 162h104v2h-104zM224 164h94v2h-94zM214 166h88v2h-88zM210 168h82v2h-82zM212 170h80v2h-80zM214 172h78v2h-78zM216 174h76v2h-76zM218 176h74v2h-74zM220 178h72v2h-72zM224 180h68v2h-68zM228 182h64v2h-64z"/><path fill="#50ff10" d="M356 160h3v2h-3zM336 162h23v2h-23zM318 164h41v2h-41zM302 166h57v2h-57zM292 168h67v16h-67zM312 184h47v2h-47zM340 186h19v2h-19z"/><path fill="#c0f8a0" d="M100 168h36v2h-36zM100 170h42v2h-42zM100 172h50v2h-50zM100 174h58v2h-58zM100 176h68v2h-68zM104 178h74v2h-74zM110 180h80v2h-80zM118 182h86v2h-86zM128 184h92v2h-92zM138 186h94v2h-94zM152 188h76v2h-76zM168 190h46v2h-46zM186 192h18v2h-18z"/><path fill="#ececd8" d="M36 176h26v2h-26zM36 178h24v2h-24zM36 180h20v2h-20zM36 182h18v2h-18zM38 184h16v2h-16zM38 186h14v2h-14zM38 188h12v2h-12zM38 190h10v2h-10zM38 192h8v2h-8zM40 194h6v2h-6zM40 196h4v2h-4zM40 198h2v4h-2zM50 234h2v2h-2zM50 236h4v2h-4zM52 238h4v4h-4zM52 242h2v2h-2z"/><path fill="#f0f0d0" d="M62 176h4v2h-4zM60 178h10v2h-10zM56 180h18v2h-18zM54 182h26v2h-26zM54 184h30v2h-30zM52 186h32v2h-32zM50 188h36v2h-36zM48 190h38v2h-38zM46 192h40v2h-40zM46 194h42v2h-42zM44 196h44v2h-44zM42 198h48v4h-48zM40 202h52v4h-52zM40 206h54v2h-54zM40 208h56v2h-56zM42 210h54v6h-54zM44 216h52v6h-52zM46 222h50v6h-50zM48 228h42v2h-42zM48 230h34v2h-34zM50 232h24v2h-24zM52 234h16v2h-16zM54 236h10v2h-10zM56 238h4v2h-4z"/><path fill="#d0f8a0" d="M100 178h4v2h-4zM98 180h12v2h-12zM96 182h22v2h-22zM100 184h28v2h-28zM104 186h34v2h-34zM108 188h44v2h-44zM112 190h56v2h-56zM116 192h70v2h-70zM122 194h74v2h-74zM128 196h54v2h-54zM146 198h24v2h-24z"/><path fill="#e8f0b0" d="M94 182h2v2h-2zM84 184h16v2h-16zM84 186h20v2h-20zM86 188h22v2h-22zM86 190h26v2h-26zM86 192h30v2h-30zM88 194h34v2h-34zM88 196h40v2h-40zM90 198h36v2h-36zM90 200h34v2h-34zM92 202h28v2h-28zM92 204h26v2h-26zM94 206h20v2h-20zM96 208h16v2h-16zM96 210h14v14h-14zM96 224h12v2h-12z"/><path fill="#a0f810" d="M232 184h80v2h-80zM232 186h108v2h-108zM236 188h123v2h-123zM244 190h115v2h-115zM252 192h107v2h-107zM272 194h87v2h-87zM312 196h47v2h-47z"/><path fill="#f0f060" d="M228 188h8v2h-8zM214 190h30v2h-30zM204 192h48v2h-48zM196 194h62v2h-62zM196 196h66v2h-66zM196 198h72v2h-72zM196 200h76v2h-76zM196 202h80v2h-80zM196 204h86v4h-86zM196 208h84v4h-84zM198 212h82v2h-82zM200 214h80v2h-80zM202 216h56v2h-56z"/><path fill="#d0f810" d="M258 194h14v2h-14zM262 196h50v2h-50zM268 198h91v2h-91zM272 200h87v2h-87zM276 202h83v2h-83zM282 204h77v2h-77z"/><path fill="#f0e880" d="M182 196h14v2h-14zM170 198h26v2h-26zM164 200h32v10h-32zM162 210h34v2h-34zM162 212h36v2h-36zM160 214h40v2h-40zM158 216h44v2h-44zM156 218h48v2h-48zM154 220h44v2h-44zM152 222h40v2h-40zM150 224h36v2h-36zM150 226h28v2h-28zM154 228h4v2h-4z"/><path fill="#f0f0a0" d="M126 198h20v2h-20zM124 200h40v2h-40zM120 202h44v2h-44zM118 204h46v2h-46zM114 206h50v2h-50zM112 208h52v2h-52zM110 210h52v4h-52zM110 214h50v2h-50zM110 216h48v2h-48zM110 218h46v2h-46zM110 220h44v2h-44zM110 222h42v2h-42zM114 224h36v2h-36z"/><path fill="#f8f010" d="M282 206h77v2h-77zM280 208h79v8h-79zM280 216h76v2h-76z"/><path fill="#f8d060" d="M258 216h22v2h-22zM204 218h80v2h-80zM198 220h84v2h-84zM192 222h88v2h-88zM186 224h92v2h-92zM186 226h88v2h-88zM202 228h68v2h-68z"/><path fill="#f8c010" d="M356 216h3v2h-3zM284 218h75v2h-75zM282 220h77v2h-77zM280 222h79v2h-79zM278 224h44v2h-44zM274 226h10v2h-10z"/><path fill="#f0d0b0" d="M108 224h6v2h-6zM96 226h54v2h-54zM94 228h60v2h-60zM94 230h54v2h-54zM94 232h48v2h-48zM94 234h42v2h-42zM94 236h36v2h-36zM94 238h30v2h-30zM94 240h26v2h-26zM96 242h20v2h-20zM98 244h14v2h-14zM100 246h8v2h-8zM102 248h2v2h-2z"/><path fill="#f8a010" d="M322 224h37v2h-37zM284 226h75v2h-75zM270 228h86v2h-86zM270 230h50v2h-50zM270 232h22v2h-22z"/><path fill="#f8b080" d="M178 226h8v2h-8zM158 228h44v2h-44zM156 230h54v2h-54zM156 232h48v2h-48zM156 234h42v2h-42zM156 236h36v2h-36zM156 238h30v2h-30zM156 240h26v2h-26zM156 242h18v2h-18zM156 244h8v2h-8z"/><path fill="#f88010" d="M356 228h3v2h-3zM320 230h39v2h-39zM292 232h67v2h-67zM274 234h85v2h-85zM278 236h60v2h-60zM280 238h34v2h-34zM284 240h10v2h-10z"/><path fill="#f8b0a0" d="M148 230h8v2h-8zM142 232h14v2h-14zM136 234h20v2h-20zM130 236h26v2h-26zM124 238h32v2h-32zM120 240h36v2h-36zM116 242h40v2h-40zM112 244h44v2h-44zM108 246h48v2h-48zM136 248h16v2h-16z"/><path fill="#f8a070" d="M210 230h60v2h-60zM204 232h66v2h-66zM198 234h62v2h-62zM192 236h56v2h-56zM186 238h50v2h-50zM182 240h44v2h-44zM200 242h16v2h-16z"/><path fill="#f85010" d="M338 236h21v2h-21zM314 238h45v2h-45zM294 240h65v2h-65zM282 242h77v2h-77zM278 244h64v2h-64zM274 246h48v2h-48zM272 248h34v2h-34zM268 250h24v2h-24z"/></svg><!--/SQ--><div class="a" style="left:265px;top:313px;width:358px;height:252px;overflow:hidden">
<div class="t" style="left:75px;top:-6px;font-size:12px;color:rgba(200,80,120,.14)">radient stop</div>
<div class="t" style="left:84px;top:21px;font-size:12px;font-weight:bold;color:rgba(190,60,200,.23)">Ty</div>
<div class="t" style="left:75px;top:100px;font-size:12px;color:rgba(60,100,220,.18)">&#8722; Color ramp</div>
<div class="t" style="left:225px;top:100px;font-size:12px;color:rgba(60,100,220,.14)">[source]</div>
<div class="t" style="left:70px;top:123px;font-size:12px;color:rgba(60,140,220,.16)">Layer rendering</div>
<div class="t" style="left:62px;top:158px;font-size:12px;color:rgba(80,170,80,.16)">Layer transparency</div>
<div class="t" style="left:58px;top:193px;font-size:12px;color:rgba(150,150,60,.14)">Layer blending mode</div>
<div class="t" style="left:248px;top:193px;font-size:12px;color:rgba(150,150,60,.14)">Normal</div>
<div class="t" style="left:50px;top:223px;font-size:12px;color:rgba(170,90,60,.16)">Feature blending mode</div>
<div class="t" style="left:251px;top:223px;font-size:12px;color:rgba(170,90,60,.14)">Normal</div>
</div>

<div class="a" style="left:265px;top:313px;width:36px;height:252px;background:#ececec"></div>
<div class="a" style="left:301px;top:313px;width:5px;height:252px;background:#efe0f0"></div>
<div class="a" style="left:265px;top:396px;width:359px;height:2px;background:#111"></div>

<!-- V slider -->
<div class="a" style="left:636px;top:312px;width:17px;height:253px;border:1px solid #a8a8a8;background:#fff"></div>
<div class="a" style="left:638px;top:316px;width:13px;height:248px;background:linear-gradient(#0a0aee 0%,#0a0aee 27%,#06069a 29%,#0808a8 29.5%,#0808a8 55%,#0a0a5a 55.5%,#0a0a5a 80.5%,#0a0a28 81%,#0a0a28 93%,#0a0a0a 93.5%)"></div>


<!-- sliders -->
<div class="a" style="left:675px;top:332px;width:53px;height:17px;background:#efeee2"></div>
<div class="a" style="left:917px;top:332px;width:75px;height:17px;background:#efeee2"></div>
<div class="a" style="left:675px;top:374px;width:53px;height:17px;background:#efeee2"></div>
<div class="a" style="left:917px;top:374px;width:75px;height:17px;background:#efeee2"></div>
<div class="a" style="left:729px;top:287px;height:19px;display:flex"><div style="width:7px;background:#f82010"></div><div style="width:8px;background:#f85010"></div><div style="width:4px;background:#f88010"></div><div style="width:4px;background:#f8a010"></div><div style="width:5px;background:#f8c010"></div><div style="width:8px;background:#f8f010"></div><div style="width:5px;background:#d0f810"></div><div style="width:9px;background:#a0f810"></div><div style="width:25px;background:#50ff10"></div><div style="width:4px;background:#50ff50"></div><div style="width:7px;background:#60ff90"></div><div style="width:9px;background:#60f0e0"></div><div style="width:8px;background:#38d8f8"></div><div style="width:7px;background:#3098f8"></div><div style="width:9px;background:#1a50d8"></div><div style="width:14px;background:#0a0aee"></div><div style="width:8px;background:#5010f8"></div><div style="width:8px;background:#9010f0"></div><div style="width:17px;background:#e010f0"></div><div style="width:8px;background:#f020a0"></div><div style="width:8px;background:#f02060"></div><div style="width:6px;background:#f01818"></div></div>

<div class="a" style="left:729px;top:329px;height:19px;display:flex"><div style="width:21px;background:#efeee4"></div><div style="width:24px;background:#d0d0f8"></div><div style="width:24px;background:#b0b0f8"></div><div style="width:26px;background:#9090f8"></div><div style="width:44px;background:#6060f8"></div><div style="width:5px;background:#5010f0"></div><div style="width:44px;background:#0a0aee"></div></div>

<div class="a" style="left:729px;top:370px;height:19px;display:flex"><div style="width:19px;background:#0a0a0a"></div><div style="width:24px;background:#0a0a22"></div><div style="width:46px;background:#0a0a58"></div><div style="width:49px;background:#06069a"></div><div style="width:50px;background:#0a0aee"></div></div>

<div class="a" style="left:729px;top:413px;height:19px;display:flex"><div style="width:43px;background:#0a0aee"></div><div style="width:50px;background:#5010f8"></div><div style="width:50px;background:#9010f0"></div><div style="width:45px;background:#e010f0"></div></div>

<div class="a" style="left:729px;top:455px;height:19px;display:flex"><div style="width:48px;background:#0a0aee"></div><div style="width:46px;background:#1a50d8"></div><div style="width:48px;background:#2898f8"></div><div style="width:46px;background:#38d8f8"></div></div>

<div class="a" style="left:729px;top:497px;height:19px;display:flex"><div style="width:14px;background:#0a0a0a"></div><div style="width:24px;background:#0a0a22"></div><div style="width:48px;background:#0a0a58"></div><div style="width:47px;background:#06069a"></div><div style="width:55px;background:#0a0aee"></div></div>

<div class="a" style="left:735px;top:537px;height:19px;display:flex"><div style="width:15px;background:#dcdcdc"></div><div style="width:30px;background:#c4c8e8"></div><div style="width:28px;background:#a8a8f0"></div><div style="width:22px;background:#8080e8"></div><div style="width:30px;background:#6060f8"></div><div style="width:15px;background:#5a20e0"></div><div style="width:42px;background:#0a0aee"></div></div>

<div class="a" style="left:735px;top:537px;width:140px;height:19px;background-image:linear-gradient(45deg,rgba(255,255,255,.35) 25%,transparent 25%,transparent 75%,rgba(255,255,255,.35) 75%),linear-gradient(45deg,rgba(255,255,255,.35) 25%,transparent 25%,transparent 75%,rgba(255,255,255,.35) 75%);background-size:8px 8px;background-position:0 0,4px 4px"></div>
<div class="a" style="left:830px;top:537px;width:30px;height:19px;background:#6060f8"></div>
<svg class="a" style="left:848px;top:285px" width="14" height="24"><path d="M1 1 H13 L7 7 Z M7 17 L13 23 H1 Z" fill="#111"/><path d="M7 18 L12 23 H2 Z" fill="#fff"/></svg>
<svg class="a" style="left:909px;top:327px" width="12" height="8"><path d="M0 0 H11 L11 0 L7 7 Z" fill="#111"/></svg>
<svg class="a" style="left:909px;top:368px" width="12" height="8"><path d="M0 0 H11 L11 0 L7 7 Z" fill="#111"/></svg>
<svg class="a" style="left:909px;top:495px" width="12" height="8"><path d="M0 0 H11 L11 0 L7 7 Z" fill="#111"/></svg>
<svg class="a" style="left:909px;top:535px" width="12" height="8"><path d="M0 0 H11 L11 0 L7 7 Z" fill="#111"/></svg>
<svg class="a" style="left:726px;top:411px" width="12" height="8"><path d="M0 0 H11 L4 7 Z" fill="#111"/></svg>
<svg class="a" style="left:726px;top:453px" width="12" height="8"><path d="M0 0 H11 L4 7 Z" fill="#111"/></svg>
<div class="a" style="left:680px;top:290px;width:17px;height:17px;border-radius:50%;border:1px solid #b4b4b4;background:#f0f0f0"></div>
<div class="t" style="left:708px;top:289px;font-size:12px">H</div>
<div class="a" style="left:680px;top:332px;width:17px;height:17px;border-radius:50%;border:1px solid #b4b4b4;background:#f0f0f0"></div>
<div class="t" style="left:708px;top:331px;font-size:12px">S</div>
<div class="a" style="left:680px;top:374px;width:17px;height:17px;border-radius:50%;background:linear-gradient(#5aa8f8,#2a80f0)"></div><div class="a" style="left:686px;top:380px;width:5px;height:5px;border-radius:50%;background:#fff"></div>
<div class="t" style="left:708px;top:373px;font-size:12px">V</div>
<div class="a" style="left:680px;top:416px;width:17px;height:17px;border-radius:50%;border:1px solid #b4b4b4;background:#f0f0f0"></div>
<div class="t" style="left:708px;top:415px;font-size:12px">R</div>
<div class="a" style="left:680px;top:458px;width:17px;height:17px;border-radius:50%;border:1px solid #b4b4b4;background:#f0f0f0"></div>
<div class="t" style="left:708px;top:457px;font-size:12px">G</div>
<div class="a" style="left:680px;top:499px;width:17px;height:17px;border-radius:50%;border:1px solid #b4b4b4;background:#f0f0f0"></div>
<div class="t" style="left:708px;top:498px;font-size:12px">B</div>
<div class="a" style="left:927px;top:286px;width:48px;height:21px;background:#ececec;border:1px solid #c4c4c4"></div>
<div class="t" style="left:929px;top:291px;font-size:12px">240°</div>
<div class="a" style="left:977px;top:287px;width:13px;height:20px;border:1px solid #c8c8c8;border-radius:5px"></div>
<svg class="a" style="left:977px;top:287px" width="13" height="20"><path d="M4 7.5 L6.5 5 L9 7.5 M4 12.5 L6.5 15 L9 12.5" stroke="#555" stroke-width="1.1" fill="none"/></svg>
<div class="a" style="left:927px;top:328px;width:48px;height:21px;background:#ececec;border:1px solid #c4c4c4"></div>
<div class="t" style="left:929px;top:333px;font-size:12px">100%</div>
<div class="a" style="left:977px;top:329px;width:13px;height:20px;border:1px solid #c8c8c8;border-radius:5px"></div>
<svg class="a" style="left:977px;top:329px" width="13" height="20"><path d="M4 7.5 L6.5 5 L9 7.5 M4 12.5 L6.5 15 L9 12.5" stroke="#555" stroke-width="1.1" fill="none"/></svg>
<div class="a" style="left:927px;top:370px;width:48px;height:21px;background:#ececec;border:1px solid #c4c4c4"></div>
<div class="t" style="left:929px;top:375px;font-size:12px">100%</div>
<div class="a" style="left:977px;top:371px;width:13px;height:20px;border:1px solid #c8c8c8;border-radius:5px"></div>
<svg class="a" style="left:977px;top:371px" width="13" height="20"><path d="M4 7.5 L6.5 5 L9 7.5 M4 12.5 L6.5 15 L9 12.5" stroke="#555" stroke-width="1.1" fill="none"/></svg>
<div class="a" style="left:927px;top:412px;width:48px;height:21px;background:#ececec;border:1px solid #c4c4c4"></div>
<div class="t" style="left:929px;top:417px;font-size:12px">0</div>
<div class="a" style="left:977px;top:413px;width:13px;height:20px;border:1px solid #c8c8c8;border-radius:5px"></div>
<svg class="a" style="left:977px;top:413px" width="13" height="20"><path d="M4 7.5 L6.5 5 L9 7.5 M4 12.5 L6.5 15 L9 12.5" stroke="#555" stroke-width="1.1" fill="none"/></svg>
<div class="a" style="left:927px;top:454px;width:48px;height:21px;background:#ececec;border:1px solid #c4c4c4"></div>
<div class="t" style="left:929px;top:459px;font-size:12px">0</div>
<div class="a" style="left:977px;top:455px;width:13px;height:20px;border:1px solid #c8c8c8;border-radius:5px"></div>
<svg class="a" style="left:977px;top:455px" width="13" height="20"><path d="M4 7.5 L6.5 5 L9 7.5 M4 12.5 L6.5 15 L9 12.5" stroke="#555" stroke-width="1.1" fill="none"/></svg>
<div class="a" style="left:927px;top:496px;width:48px;height:21px;background:#ececec;border:1px solid #c4c4c4"></div>
<div class="t" style="left:929px;top:501px;font-size:12px">255</div>
<div class="a" style="left:977px;top:497px;width:13px;height:20px;border:1px solid #c8c8c8;border-radius:5px"></div>
<svg class="a" style="left:977px;top:497px" width="13" height="20"><path d="M4 7.5 L6.5 5 L9 7.5 M4 12.5 L6.5 15 L9 12.5" stroke="#555" stroke-width="1.1" fill="none"/></svg>
<div class="a" style="left:927px;top:537px;width:48px;height:21px;background:#ececec;border:1px solid #c4c4c4"></div>
<div class="t" style="left:929px;top:542px;font-size:12px">100%</div>
<div class="a" style="left:977px;top:538px;width:13px;height:20px;border:1px solid #c8c8c8;border-radius:5px"></div>
<svg class="a" style="left:977px;top:538px" width="13" height="20"><path d="M4 7.5 L6.5 5 L9 7.5 M4 12.5 L6.5 15 L9 12.5" stroke="#555" stroke-width="1.1" fill="none"/></svg>
<div class="t" style="left:680px;top:539px;font-size:12px">Opacity</div>
<div class="t" style="left:680px;top:571px;font-size:12px">HTML notation</div>
<div class="a" style="left:769px;top:569px;width:222px;height:19px;background:#ececec;border:1px solid #c0c0c0"></div>
<div class="t" style="left:772px;top:572px;font-size:12px">#0000ff</div>
<svg class="a" style="left:972px;top:574px" width="12" height="9"><path d="M1 1 H11 L6 7 Z" fill="none" stroke="#aaa" stroke-width="1"/></svg>

<!-- front scrollbar & group right edge -->
<div class="a" style="left:1007px;top:212px;width:7px;height:205px;background:#d6d6d6;border-radius:4px"></div>

<!-- front dialog bottom buttons -->
<div class="a" style="left:235px;top:626px;width:90px;height:19px;border:1px solid #d0d0d0;border-radius:4px;background:#ececec"></div>
<div class="t" style="left:249px;top:629px;font-size:12px;color:#888">Information</div>
<div class="a" style="left:867px;top:626px;width:66px;height:19px;border:1px solid #c0c0c0;border-radius:4px;background:#f2f2f2"></div>
<div class="t" style="left:879px;top:629px;font-size:12px">Cancel</div>
<div class="a" style="left:946px;top:626px;width:66px;height:19px;border:1px solid #2a6fd8;border-radius:4px;background:linear-gradient(#6ab4fc,#2f8cf6 50%,#1f7cf0)"></div>
<div class="t" style="left:969px;top:629px;font-size:12px">OK</div>

<!-- back dialog right column -->
<div class="a" style="left:1037px;top:65px;width:4px;height:614px;background:#d4d4d4"></div>
<div class="a" style="left:1041px;top:65px;width:1px;height:607px;background:#c8c8c8"></div>
<div class="a" style="left:1037px;top:69px;width:21px;height:19px;background:#ececec;border:1px solid #c8c8c8;border-left:none"></div>
<div class="a" style="left:1058px;top:69px;width:14px;height:19px;background:#d6d6d6;border-radius:4px"></div>
<svg class="a" style="left:1058px;top:69px" width="14" height="19"><path d="M4.5 7.5 L7 5 L9.5 7.5 M4.5 11.5 L7 14 L9.5 11.5" stroke="#fff" stroke-width="1.2" fill="none"/></svg>
<div class="a" style="left:1067px;top:102px;width:7px;height:175px;background:#d6d6d6;border-radius:4px"></div>
<div class="a" style="left:1042px;top:254px;width:21px;height:1px;background:#b8b8b8"></div>
<div class="a" style="left:1037px;top:270px;width:21px;height:19px;background:#ececec;border:1px solid #c8c8c8;border-left:none"></div>
<div class="a" style="left:1050px;top:270px;width:14px;height:19px;background:#d6d6d6;border-radius:4px"></div>
<svg class="a" style="left:1037px;top:335px" width="16" height="20"><path d="M1 1 H9 V13 H1" fill="#fff" stroke="#333" stroke-width="1"/><path d="M2 4 H8 M2 7 H8 M2 10 H8" stroke="#555"/><path d="M7 12 H15 L11 18 Z" fill="#666"/></svg>
<svg class="a" style="left:1037px;top:371px" width="16" height="20"><path d="M1 1 H9 V13 H1" fill="#fff" stroke="#333" stroke-width="1"/><path d="M2 4 H8 M2 7 H8 M2 10 H8" stroke="#555"/><path d="M7 12 H15 L11 18 Z" fill="#666"/></svg>
<div class="a" style="left:1037px;top:467px;width:21px;height:20px;background:#ececec;border:1px solid #c8c8c8;border-left:none"></div>
<div class="a" style="left:1062px;top:467px;width:11px;height:20px;border:1px solid #c8c8c8;border-radius:4px"></div>
<svg class="a" style="left:1062px;top:467px" width="11" height="20"><path d="M3 8 L5.5 5.5 L8 8 M3 12 L5.5 14.5 L8 12" stroke="#555" stroke-width="1" fill="none"/></svg>
<div class="a" style="left:1050px;top:564px;width:24px;height:25px;border:1px solid #d0d0d0;background:#ececec"></div>
<svg class="a" style="left:1050px;top:564px" width="24" height="25"><path d="M12 6 L13.8 10.5 L18.5 10.8 L14.8 13.8 L16 18.5 L12 15.8 L8 18.5 L9.2 13.8 L5.5 10.8 L10.2 10.5 Z" fill="#f6d21e" stroke="#c9a010" stroke-width=".6"/></svg>
<div class="a" style="left:1050px;top:605px;width:24px;height:25px;border:1px solid #d0d0d0;background:#ececec"></div>
<svg class="a" style="left:1050px;top:605px" width="24" height="25"><text x="5" y="12" font-size="8" fill="#c33" font-family="Liberation Sans">A</text><text x="5" y="20" font-size="8" fill="#44a" font-family="Liberation Sans">Z</text><path d="M16 6 V18 M12.5 14.5 L16 18.5 L19.5 14.5" stroke="#7a9ad0" stroke-width="1.8" fill="none"/></svg>

<!-- back dialog bottom buttons -->
<div class="a" style="left:319px;top:676px;width:54px;height:19px;border:1px solid #c8c8c8;border-radius:4px;background:#ececec"></div>
<div class="t" style="left:333px;top:679px;font-size:12px">Help</div>
<div class="a" style="left:386px;top:676px;width:67px;height:19px;border:1px solid #c8c8c8;border-radius:4px;background:#ececec"></div>
<div class="t" style="left:405px;top:679px;font-size:12px">Style</div>
<svg class="a" style="left:435px;top:682px" width="8" height="6"><path d="M0 0 H7 L3.5 5 Z" fill="#111"/></svg>
<div class="a" style="left:467px;top:676px;width:60px;height:19px;border:1px solid #c8c8c8;border-radius:4px;background:#ececec"></div>
<div class="t" style="left:481px;top:679px;font-size:12px">Apply</div>
<div class="a" style="left:933px;top:676px;width:64px;height:19px;border:1px solid #c8c8c8;border-radius:4px;background:#ececec"></div>
<div class="t" style="left:946px;top:679px;font-size:12px">Cancel</div>
<div class="a" style="left:1012px;top:676px;width:65px;height:19px;border:1px solid #c8c8c8;border-radius:4px;background:#ececec"></div>
<div class="t" style="left:1035px;top:679px;font-size:12px">OK</div>

<!-- ghost labels -->
<!-- ghost labels -->
<div class="a" style="left:230px;top:240px;width:12px;height:240px;overflow:hidden"><div class="t" style="left:-32px;top:5px;font-size:13px;color:#f2f2f2">Display</div><div class="t" style="left:-32px;top:40px;font-size:13px;color:#f2f2f2">Actions</div><div class="t" style="left:-32px;top:74px;font-size:13px;color:#f2f2f2">Joins</div><div class="t" style="left:-32px;top:108px;font-size:13px;color:#f2f2f2">Diagram</div><div class="t" style="left:-32px;top:143px;font-size:13px;color:#f2f2f2">Metadata</div><div class="t" style="left:-32px;top:177px;font-size:13px;color:#f2f2f2">Variable</div><div class="t" style="left:-32px;top:210px;font-size:13px;color:#f2f2f2">Legend</div></div>
</body></html>
